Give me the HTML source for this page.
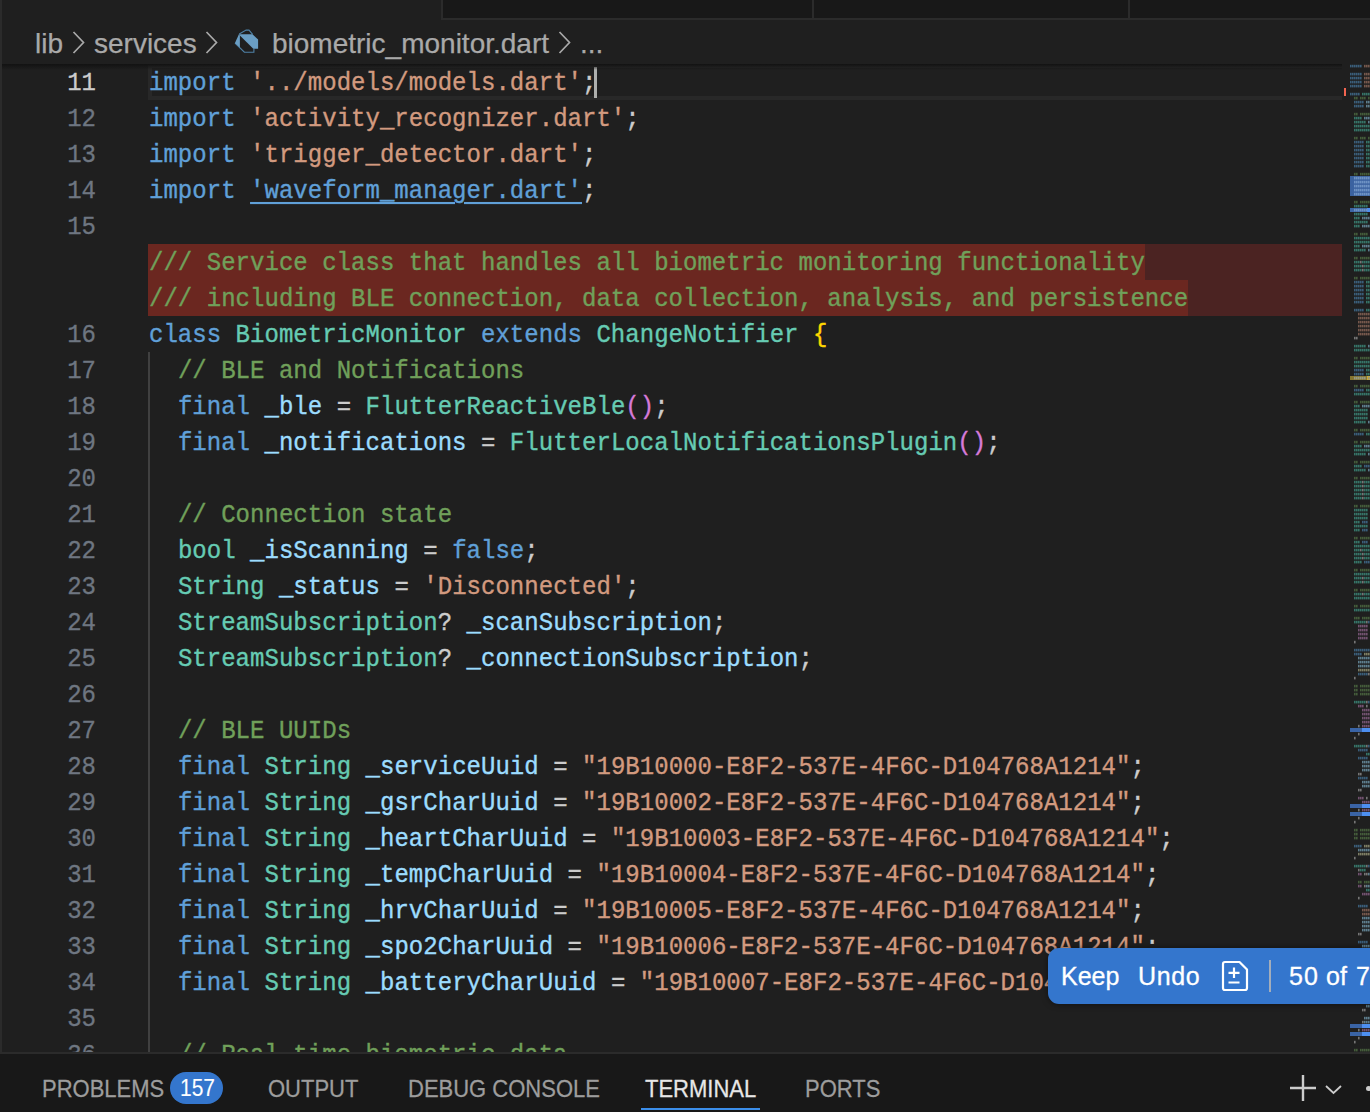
<!DOCTYPE html>
<html><head><meta charset="utf-8">
<style>
*{margin:0;padding:0;box-sizing:border-box}
html,body{width:1370px;height:1112px;overflow:hidden;background:#1f1f1f}
body{position:relative;font-family:"Liberation Sans",sans-serif}
.abs{position:absolute}
.ln{position:absolute;left:0;width:96px;text-align:right;font-family:"Liberation Mono",monospace;font-size:24px;line-height:36px;color:#6e7681;transform-origin:0 0;transform:scaleY(1.07);-webkit-text-stroke:0.3px currentColor}
.ln.act{color:#cccccc}
.code{position:absolute;left:149px;font-family:"Liberation Mono",monospace;font-size:24px;line-height:36px;color:#cccccc;white-space:pre;transform-origin:0 0;transform:scaleY(1.07);-webkit-text-stroke:0.35px currentColor;letter-spacing:0.03px}
.k{color:#60a0d8}.s{color:#d29a7f}.t{color:#66cbb3}.v{color:#9cdcfe}.c{color:#70a05a}.p{color:#d67ad8}.y{color:#ffd700}
.lnk{color:#60a0d8;text-decoration:underline;text-underline-offset:4px;text-decoration-thickness:2px}
.bct{position:absolute;top:29px;font-size:28px;color:#a9a9a9;white-space:pre;line-height:30px;-webkit-text-stroke:0.25px currentColor}
.ptab{position:absolute;top:1073px;font-size:22px;line-height:30px;color:#9d9d9d;white-space:pre;transform-origin:0 0;transform:scaleY(1.1);-webkit-text-stroke:0.25px currentColor}
.wt{position:absolute;font-size:25px;line-height:30px;color:#ffffff;white-space:pre;top:961px;-webkit-text-stroke:0.3px currentColor}
</style></head><body>

<div class="abs" style="left:441px;top:0;width:929px;height:20px;background:#181818;border-left:2px solid #2b2b2b;border-bottom:2px solid #2b2b2b"></div>
<div class="abs" style="left:812px;top:0;width:2px;height:20px;background:#2b2b2b"></div>
<div class="abs" style="left:1128px;top:0;width:2px;height:20px;background:#2b2b2b"></div>
<span class="bct" style="left:35px">lib</span>
<svg class="abs" style="left:72px;top:31px" width="13" height="23" viewBox="0 0 13 23"><path d="M1.5 1 L11.5 11.5 L1.5 22" fill="none" stroke="#a9a9a9" stroke-width="1.7"/></svg>
<span class="bct" style="left:94px">services</span>
<svg class="abs" style="left:205px;top:31px" width="13" height="23" viewBox="0 0 13 23"><path d="M1.5 1 L11.5 11.5 L1.5 22" fill="none" stroke="#a9a9a9" stroke-width="1.7"/></svg>
<svg class="abs" style="left:230px;top:26px" width="32" height="32" viewBox="0 0 32 32">
<path d="M9.2 8 L16.1 4.1 L19 4.1 L22.6 8.3 M5 17 L14.4 26.2 L23.9 26.2 L23.9 22.7" fill="none" stroke="#4f81a6" stroke-width="1.1"/>
<path d="M8.9 8.3 L22.4 8.3 L28.1 13.4 L28.1 22.8 L23.3 22.8 L9.9 9.4 Z" fill="#6a9ec4"/>
<path d="M8.9 8.3 L5 17 L9.9 21.4 L9.9 9.4 Z" fill="#6a9ec4"/>
</svg>
<span class="bct" style="left:272px">biometric_monitor.dart</span>
<svg class="abs" style="left:558px;top:31px" width="13" height="23" viewBox="0 0 13 23"><path d="M1.5 1 L11.5 11.5 L1.5 22" fill="none" stroke="#a9a9a9" stroke-width="1.7"/></svg>
<span class="bct" style="left:580px">...</span>
<div class="abs" style="left:148px;top:64px;width:1194px;height:36px;border:4px solid #282828;border-right:0"></div>
<div class="abs" style="left:148px;top:244px;width:1194px;height:72px;background:#4b2322"></div>
<div class="abs" style="left:148px;top:244px;width:997px;height:36px;background:#6b2720"></div>
<div class="abs" style="left:148px;top:280px;width:1040px;height:36px;background:#6b2720"></div>
<div class="abs" style="left:148px;top:352px;width:2px;height:700px;background:#404040"></div>
<div class="ln act" style="top:64px">11</div>
<div class="code" style="top:64px"><span class=k>import</span> <span class=s>'../models/models.dart'</span>;</div>
<div class="ln" style="top:100px">12</div>
<div class="code" style="top:100px"><span class=k>import</span> <span class=s>'activity_recognizer.dart'</span>;</div>
<div class="ln" style="top:136px">13</div>
<div class="code" style="top:136px"><span class=k>import</span> <span class=s>'trigger_detector.dart'</span>;</div>
<div class="ln" style="top:172px">14</div>
<div class="code" style="top:172px"><span class=k>import</span> <span class=lnk>'waveform_manager.dart'</span>;</div>
<div class="ln" style="top:208px">15</div>
<div class="code c" style="top:244px">/// Service class that handles all biometric monitoring functionality</div>
<div class="code c" style="top:280px">/// including BLE connection, data collection, analysis, and persistence</div>
<div class="ln" style="top:316px">16</div>
<div class="code" style="top:316px"><span class=k>class</span> <span class=t>BiometricMonitor</span> <span class=k>extends</span> <span class=t>ChangeNotifier</span> <span class=y>{</span></div>
<div class="ln" style="top:352px">17</div>
<div class="code" style="top:352px">  <span class=c>// BLE and Notifications</span></div>
<div class="ln" style="top:388px">18</div>
<div class="code" style="top:388px">  <span class=k>final</span> <span class=v>_ble</span> = <span class=t>FlutterReactiveBle</span><span class=p>()</span>;</div>
<div class="ln" style="top:424px">19</div>
<div class="code" style="top:424px">  <span class=k>final</span> <span class=v>_notifications</span> = <span class=t>FlutterLocalNotificationsPlugin</span><span class=p>()</span>;</div>
<div class="ln" style="top:460px">20</div>
<div class="ln" style="top:496px">21</div>
<div class="code" style="top:496px">  <span class=c>// Connection state</span></div>
<div class="ln" style="top:532px">22</div>
<div class="code" style="top:532px">  <span class=t>bool</span> <span class=v>_isScanning</span> = <span class=k>false</span>;</div>
<div class="ln" style="top:568px">23</div>
<div class="code" style="top:568px">  <span class=t>String</span> <span class=v>_status</span> = <span class=s>'Disconnected'</span>;</div>
<div class="ln" style="top:604px">24</div>
<div class="code" style="top:604px">  <span class=t>StreamSubscription</span>? <span class=v>_scanSubscription</span>;</div>
<div class="ln" style="top:640px">25</div>
<div class="code" style="top:640px">  <span class=t>StreamSubscription</span>? <span class=v>_connectionSubscription</span>;</div>
<div class="ln" style="top:676px">26</div>
<div class="ln" style="top:712px">27</div>
<div class="code" style="top:712px">  <span class=c>// BLE UUIDs</span></div>
<div class="ln" style="top:748px">28</div>
<div class="code" style="top:748px">  <span class=k>final</span> <span class=t>String</span> <span class=v>_serviceUuid</span> = <span class=s>"19B10000-E8F2-537E-4F6C-D104768A1214"</span>;</div>
<div class="ln" style="top:784px">29</div>
<div class="code" style="top:784px">  <span class=k>final</span> <span class=t>String</span> <span class=v>_gsrCharUuid</span> = <span class=s>"19B10002-E8F2-537E-4F6C-D104768A1214"</span>;</div>
<div class="ln" style="top:820px">30</div>
<div class="code" style="top:820px">  <span class=k>final</span> <span class=t>String</span> <span class=v>_heartCharUuid</span> = <span class=s>"19B10003-E8F2-537E-4F6C-D104768A1214"</span>;</div>
<div class="ln" style="top:856px">31</div>
<div class="code" style="top:856px">  <span class=k>final</span> <span class=t>String</span> <span class=v>_tempCharUuid</span> = <span class=s>"19B10004-E8F2-537E-4F6C-D104768A1214"</span>;</div>
<div class="ln" style="top:892px">32</div>
<div class="code" style="top:892px">  <span class=k>final</span> <span class=t>String</span> <span class=v>_hrvCharUuid</span> = <span class=s>"19B10005-E8F2-537E-4F6C-D104768A1214"</span>;</div>
<div class="ln" style="top:928px">33</div>
<div class="code" style="top:928px">  <span class=k>final</span> <span class=t>String</span> <span class=v>_spo2CharUuid</span> = <span class=s>"19B10006-E8F2-537E-4F6C-D104768A1214"</span>;</div>
<div class="ln" style="top:964px">34</div>
<div class="code" style="top:964px">  <span class=k>final</span> <span class=t>String</span> <span class=v>_batteryCharUuid</span> = <span class=s>"19B10007-E8F2-537E-4F6C-D104768A1214"</span>;</div>
<div class="ln" style="top:1000px">35</div>
<div class="ln" style="top:1036px">36</div>
<div class="code" style="top:1036px">  <span class=c>// Real-time biometric data</span></div>
<div class="abs" style="left:594px;top:67px;width:3px;height:31px;background:#aeafad"></div>
<div class="abs" style="left:2px;top:64px;width:1340px;height:6px;background:linear-gradient(#121212,rgba(31,31,31,0))"></div>
<div class="abs" style="left:0;top:0;width:2px;height:1052px;background:#2b2b2b"></div>
<svg class="abs" style="left:0;top:0" width="1370" height="1112" viewBox="0 0 1370 1112"><rect x="1350" y="64.8" width="1.6" height="2.6" fill="#3a5e7a"/><rect x="1352" y="64.8" width="1.6" height="2.6" fill="#3a5e7a"/><rect x="1354" y="64.8" width="1.6" height="2.6" fill="#3a5e7a"/><rect x="1356" y="64.8" width="1.6" height="2.6" fill="#3a5e7a"/><rect x="1358" y="64.8" width="1.6" height="2.6" fill="#3a5e7a"/><rect x="1360" y="64.8" width="1.6" height="2.6" fill="#3a5e7a"/><rect x="1364" y="64.8" width="1.6" height="2.6" fill="#76584c"/><rect x="1366" y="64.8" width="1.6" height="2.6" fill="#76584c"/><rect x="1368" y="64.8" width="1.6" height="2.6" fill="#76584c"/><rect x="1350" y="72.8" width="1.6" height="2.6" fill="#3a5e7a"/><rect x="1352" y="72.8" width="1.6" height="2.6" fill="#3a5e7a"/><rect x="1354" y="72.8" width="1.6" height="2.6" fill="#3a5e7a"/><rect x="1356" y="72.8" width="1.6" height="2.6" fill="#3a5e7a"/><rect x="1358" y="72.8" width="1.6" height="2.6" fill="#3a5e7a"/><rect x="1360" y="72.8" width="1.6" height="2.6" fill="#3a5e7a"/><rect x="1364" y="72.8" width="1.6" height="2.6" fill="#76584c"/><rect x="1366" y="72.8" width="1.6" height="2.6" fill="#76584c"/><rect x="1368" y="72.8" width="1.6" height="2.6" fill="#76584c"/><rect x="1350" y="76.8" width="1.6" height="2.6" fill="#3a5e7a"/><rect x="1352" y="76.8" width="1.6" height="2.6" fill="#3a5e7a"/><rect x="1354" y="76.8" width="1.6" height="2.6" fill="#3a5e7a"/><rect x="1356" y="76.8" width="1.6" height="2.6" fill="#3a5e7a"/><rect x="1358" y="76.8" width="1.6" height="2.6" fill="#3a5e7a"/><rect x="1360" y="76.8" width="1.6" height="2.6" fill="#3a5e7a"/><rect x="1364" y="76.8" width="1.6" height="2.6" fill="#76584c"/><rect x="1366" y="76.8" width="1.6" height="2.6" fill="#76584c"/><rect x="1368" y="76.8" width="1.6" height="2.6" fill="#76584c"/><rect x="1350" y="80.8" width="1.6" height="2.6" fill="#3a5e7a"/><rect x="1352" y="80.8" width="1.6" height="2.6" fill="#3a5e7a"/><rect x="1354" y="80.8" width="1.6" height="2.6" fill="#3a5e7a"/><rect x="1356" y="80.8" width="1.6" height="2.6" fill="#3a5e7a"/><rect x="1358" y="80.8" width="1.6" height="2.6" fill="#3a5e7a"/><rect x="1360" y="80.8" width="1.6" height="2.6" fill="#3a5e7a"/><rect x="1364" y="80.8" width="1.6" height="2.6" fill="#76584c"/><rect x="1366" y="80.8" width="1.6" height="2.6" fill="#76584c"/><rect x="1368" y="80.8" width="1.6" height="2.6" fill="#76584c"/><rect x="1350" y="84.8" width="1.6" height="2.6" fill="#3a5e7a"/><rect x="1352" y="84.8" width="1.6" height="2.6" fill="#3a5e7a"/><rect x="1354" y="84.8" width="1.6" height="2.6" fill="#3a5e7a"/><rect x="1356" y="84.8" width="1.6" height="2.6" fill="#3a5e7a"/><rect x="1358" y="84.8" width="1.6" height="2.6" fill="#3a5e7a"/><rect x="1360" y="84.8" width="1.6" height="2.6" fill="#3a5e7a"/><rect x="1364" y="84.8" width="1.6" height="2.6" fill="#76584c"/><rect x="1366" y="84.8" width="1.6" height="2.6" fill="#76584c"/><rect x="1368" y="84.8" width="1.6" height="2.6" fill="#76584c"/><rect x="1350" y="92.8" width="1.6" height="2.6" fill="#3a5e7a"/><rect x="1352" y="92.8" width="1.6" height="2.6" fill="#3a5e7a"/><rect x="1354" y="92.8" width="1.6" height="2.6" fill="#3a5e7a"/><rect x="1356" y="92.8" width="1.6" height="2.6" fill="#3a5e7a"/><rect x="1358" y="92.8" width="1.6" height="2.6" fill="#3a5e7a"/><rect x="1362" y="92.8" width="1.6" height="2.6" fill="#367468"/><rect x="1364" y="92.8" width="1.6" height="2.6" fill="#367468"/><rect x="1366" y="92.8" width="1.6" height="2.6" fill="#367468"/><rect x="1368" y="92.8" width="1.6" height="2.6" fill="#367468"/><rect x="1354" y="96.8" width="1.6" height="2.6" fill="#445c3a"/><rect x="1356" y="96.8" width="1.6" height="2.6" fill="#445c3a"/><rect x="1360" y="96.8" width="1.6" height="2.6" fill="#445c3a"/><rect x="1362" y="96.8" width="1.6" height="2.6" fill="#445c3a"/><rect x="1364" y="96.8" width="1.6" height="2.6" fill="#445c3a"/><rect x="1368" y="96.8" width="1.6" height="2.6" fill="#445c3a"/><rect x="1354" y="100.8" width="1.6" height="2.6" fill="#3a5e7a"/><rect x="1356" y="100.8" width="1.6" height="2.6" fill="#3a5e7a"/><rect x="1358" y="100.8" width="1.6" height="2.6" fill="#3a5e7a"/><rect x="1360" y="100.8" width="1.6" height="2.6" fill="#3a5e7a"/><rect x="1362" y="100.8" width="1.6" height="2.6" fill="#3a5e7a"/><rect x="1366" y="100.8" width="1.6" height="2.6" fill="#5e7e8e"/><rect x="1368" y="100.8" width="1.6" height="2.6" fill="#5e7e8e"/><rect x="1370" y="100.8" width="1.6" height="2.6" fill="#5e7e8e"/><rect x="1372" y="100.8" width="1.6" height="2.6" fill="#5e7e8e"/><rect x="1354" y="104.8" width="1.6" height="2.6" fill="#3a5e7a"/><rect x="1356" y="104.8" width="1.6" height="2.6" fill="#3a5e7a"/><rect x="1358" y="104.8" width="1.6" height="2.6" fill="#3a5e7a"/><rect x="1360" y="104.8" width="1.6" height="2.6" fill="#3a5e7a"/><rect x="1362" y="104.8" width="1.6" height="2.6" fill="#3a5e7a"/><rect x="1366" y="104.8" width="1.6" height="2.6" fill="#5e7e8e"/><rect x="1368" y="104.8" width="1.6" height="2.6" fill="#5e7e8e"/><rect x="1370" y="104.8" width="1.6" height="2.6" fill="#5e7e8e"/><rect x="1372" y="104.8" width="1.6" height="2.6" fill="#5e7e8e"/><rect x="1354" y="112.8" width="1.6" height="2.6" fill="#445c3a"/><rect x="1356" y="112.8" width="1.6" height="2.6" fill="#445c3a"/><rect x="1360" y="112.8" width="1.6" height="2.6" fill="#445c3a"/><rect x="1362" y="112.8" width="1.6" height="2.6" fill="#445c3a"/><rect x="1364" y="112.8" width="1.6" height="2.6" fill="#445c3a"/><rect x="1366" y="112.8" width="1.6" height="2.6" fill="#445c3a"/><rect x="1368" y="112.8" width="1.6" height="2.6" fill="#445c3a"/><rect x="1370" y="112.8" width="1.6" height="2.6" fill="#445c3a"/><rect x="1354" y="116.8" width="1.6" height="2.6" fill="#367468"/><rect x="1356" y="116.8" width="1.6" height="2.6" fill="#367468"/><rect x="1358" y="116.8" width="1.6" height="2.6" fill="#367468"/><rect x="1360" y="116.8" width="1.6" height="2.6" fill="#367468"/><rect x="1364" y="116.8" width="1.6" height="2.6" fill="#5e7e8e"/><rect x="1366" y="116.8" width="1.6" height="2.6" fill="#5e7e8e"/><rect x="1368" y="116.8" width="1.6" height="2.6" fill="#5e7e8e"/><rect x="1370" y="116.8" width="1.6" height="2.6" fill="#5e7e8e"/><rect x="1354" y="120.8" width="1.6" height="2.6" fill="#367468"/><rect x="1356" y="120.8" width="1.6" height="2.6" fill="#367468"/><rect x="1358" y="120.8" width="1.6" height="2.6" fill="#367468"/><rect x="1360" y="120.8" width="1.6" height="2.6" fill="#367468"/><rect x="1362" y="120.8" width="1.6" height="2.6" fill="#367468"/><rect x="1364" y="120.8" width="1.6" height="2.6" fill="#367468"/><rect x="1368" y="120.8" width="1.6" height="2.6" fill="#5e7e8e"/><rect x="1370" y="120.8" width="1.6" height="2.6" fill="#5e7e8e"/><rect x="1354" y="124.8" width="1.6" height="2.6" fill="#367468"/><rect x="1356" y="124.8" width="1.6" height="2.6" fill="#367468"/><rect x="1358" y="124.8" width="1.6" height="2.6" fill="#367468"/><rect x="1360" y="124.8" width="1.6" height="2.6" fill="#367468"/><rect x="1362" y="124.8" width="1.6" height="2.6" fill="#367468"/><rect x="1364" y="124.8" width="1.6" height="2.6" fill="#367468"/><rect x="1366" y="124.8" width="1.6" height="2.6" fill="#367468"/><rect x="1368" y="124.8" width="1.6" height="2.6" fill="#367468"/><rect x="1354" y="128.8" width="1.6" height="2.6" fill="#367468"/><rect x="1356" y="128.8" width="1.6" height="2.6" fill="#367468"/><rect x="1358" y="128.8" width="1.6" height="2.6" fill="#367468"/><rect x="1360" y="128.8" width="1.6" height="2.6" fill="#367468"/><rect x="1362" y="128.8" width="1.6" height="2.6" fill="#367468"/><rect x="1364" y="128.8" width="1.6" height="2.6" fill="#367468"/><rect x="1366" y="128.8" width="1.6" height="2.6" fill="#367468"/><rect x="1368" y="128.8" width="1.6" height="2.6" fill="#367468"/><rect x="1354" y="136.8" width="1.6" height="2.6" fill="#445c3a"/><rect x="1356" y="136.8" width="1.6" height="2.6" fill="#445c3a"/><rect x="1360" y="136.8" width="1.6" height="2.6" fill="#445c3a"/><rect x="1362" y="136.8" width="1.6" height="2.6" fill="#445c3a"/><rect x="1364" y="136.8" width="1.6" height="2.6" fill="#445c3a"/><rect x="1368" y="136.8" width="1.6" height="2.6" fill="#445c3a"/><rect x="1370" y="136.8" width="1.6" height="2.6" fill="#445c3a"/><rect x="1354" y="140.8" width="1.6" height="2.6" fill="#3a5e7a"/><rect x="1356" y="140.8" width="1.6" height="2.6" fill="#3a5e7a"/><rect x="1358" y="140.8" width="1.6" height="2.6" fill="#3a5e7a"/><rect x="1360" y="140.8" width="1.6" height="2.6" fill="#3a5e7a"/><rect x="1362" y="140.8" width="1.6" height="2.6" fill="#3a5e7a"/><rect x="1366" y="140.8" width="1.6" height="2.6" fill="#367468"/><rect x="1368" y="140.8" width="1.6" height="2.6" fill="#367468"/><rect x="1370" y="140.8" width="1.6" height="2.6" fill="#367468"/><rect x="1354" y="144.8" width="1.6" height="2.6" fill="#3a5e7a"/><rect x="1356" y="144.8" width="1.6" height="2.6" fill="#3a5e7a"/><rect x="1358" y="144.8" width="1.6" height="2.6" fill="#3a5e7a"/><rect x="1360" y="144.8" width="1.6" height="2.6" fill="#3a5e7a"/><rect x="1362" y="144.8" width="1.6" height="2.6" fill="#3a5e7a"/><rect x="1366" y="144.8" width="1.6" height="2.6" fill="#367468"/><rect x="1368" y="144.8" width="1.6" height="2.6" fill="#367468"/><rect x="1370" y="144.8" width="1.6" height="2.6" fill="#367468"/><rect x="1354" y="148.8" width="1.6" height="2.6" fill="#3a5e7a"/><rect x="1356" y="148.8" width="1.6" height="2.6" fill="#3a5e7a"/><rect x="1358" y="148.8" width="1.6" height="2.6" fill="#3a5e7a"/><rect x="1360" y="148.8" width="1.6" height="2.6" fill="#3a5e7a"/><rect x="1362" y="148.8" width="1.6" height="2.6" fill="#3a5e7a"/><rect x="1366" y="148.8" width="1.6" height="2.6" fill="#367468"/><rect x="1368" y="148.8" width="1.6" height="2.6" fill="#367468"/><rect x="1370" y="148.8" width="1.6" height="2.6" fill="#367468"/><rect x="1354" y="152.8" width="1.6" height="2.6" fill="#3a5e7a"/><rect x="1356" y="152.8" width="1.6" height="2.6" fill="#3a5e7a"/><rect x="1358" y="152.8" width="1.6" height="2.6" fill="#3a5e7a"/><rect x="1360" y="152.8" width="1.6" height="2.6" fill="#3a5e7a"/><rect x="1362" y="152.8" width="1.6" height="2.6" fill="#3a5e7a"/><rect x="1366" y="152.8" width="1.6" height="2.6" fill="#367468"/><rect x="1368" y="152.8" width="1.6" height="2.6" fill="#367468"/><rect x="1370" y="152.8" width="1.6" height="2.6" fill="#367468"/><rect x="1354" y="156.8" width="1.6" height="2.6" fill="#3a5e7a"/><rect x="1356" y="156.8" width="1.6" height="2.6" fill="#3a5e7a"/><rect x="1358" y="156.8" width="1.6" height="2.6" fill="#3a5e7a"/><rect x="1360" y="156.8" width="1.6" height="2.6" fill="#3a5e7a"/><rect x="1362" y="156.8" width="1.6" height="2.6" fill="#3a5e7a"/><rect x="1366" y="156.8" width="1.6" height="2.6" fill="#367468"/><rect x="1368" y="156.8" width="1.6" height="2.6" fill="#367468"/><rect x="1370" y="156.8" width="1.6" height="2.6" fill="#367468"/><rect x="1354" y="160.8" width="1.6" height="2.6" fill="#3a5e7a"/><rect x="1356" y="160.8" width="1.6" height="2.6" fill="#3a5e7a"/><rect x="1358" y="160.8" width="1.6" height="2.6" fill="#3a5e7a"/><rect x="1360" y="160.8" width="1.6" height="2.6" fill="#3a5e7a"/><rect x="1362" y="160.8" width="1.6" height="2.6" fill="#3a5e7a"/><rect x="1366" y="160.8" width="1.6" height="2.6" fill="#367468"/><rect x="1368" y="160.8" width="1.6" height="2.6" fill="#367468"/><rect x="1370" y="160.8" width="1.6" height="2.6" fill="#367468"/><rect x="1354" y="164.8" width="1.6" height="2.6" fill="#3a5e7a"/><rect x="1356" y="164.8" width="1.6" height="2.6" fill="#3a5e7a"/><rect x="1358" y="164.8" width="1.6" height="2.6" fill="#3a5e7a"/><rect x="1360" y="164.8" width="1.6" height="2.6" fill="#3a5e7a"/><rect x="1362" y="164.8" width="1.6" height="2.6" fill="#3a5e7a"/><rect x="1366" y="164.8" width="1.6" height="2.6" fill="#367468"/><rect x="1368" y="164.8" width="1.6" height="2.6" fill="#367468"/><rect x="1370" y="164.8" width="1.6" height="2.6" fill="#367468"/><rect x="1354" y="172.8" width="1.6" height="2.6" fill="#445c3a"/><rect x="1356" y="172.8" width="1.6" height="2.6" fill="#445c3a"/><rect x="1360" y="172.8" width="1.6" height="2.6" fill="#445c3a"/><rect x="1362" y="172.8" width="1.6" height="2.6" fill="#445c3a"/><rect x="1364" y="172.8" width="1.6" height="2.6" fill="#445c3a"/><rect x="1366" y="172.8" width="1.6" height="2.6" fill="#445c3a"/><rect x="1368" y="172.8" width="1.6" height="2.6" fill="#445c3a"/><rect x="1350" y="176" width="20" height="4" fill="#3b62a0"/><rect x="1354" y="176.8" width="1.6" height="2.6" fill="#6e92c4"/><rect x="1356" y="176.8" width="1.6" height="2.6" fill="#6e92c4"/><rect x="1358" y="176.8" width="1.6" height="2.6" fill="#6e92c4"/><rect x="1360" y="176.8" width="1.6" height="2.6" fill="#6e92c4"/><rect x="1362" y="176.8" width="1.6" height="2.6" fill="#6e92c4"/><rect x="1364" y="176.8" width="1.6" height="2.6" fill="#6e92c4"/><rect x="1366" y="176.8" width="1.6" height="2.6" fill="#6e92c4"/><rect x="1368" y="176.8" width="1.6" height="2.6" fill="#6e92c4"/><rect x="1350" y="180" width="20" height="4" fill="#3b62a0"/><rect x="1354" y="180.8" width="1.6" height="2.6" fill="#6e92c4"/><rect x="1356" y="180.8" width="1.6" height="2.6" fill="#6e92c4"/><rect x="1358" y="180.8" width="1.6" height="2.6" fill="#6e92c4"/><rect x="1360" y="180.8" width="1.6" height="2.6" fill="#6e92c4"/><rect x="1362" y="180.8" width="1.6" height="2.6" fill="#6e92c4"/><rect x="1364" y="180.8" width="1.6" height="2.6" fill="#6e92c4"/><rect x="1366" y="180.8" width="1.6" height="2.6" fill="#6e92c4"/><rect x="1368" y="180.8" width="1.6" height="2.6" fill="#6e92c4"/><rect x="1350" y="184" width="20" height="4" fill="#3b62a0"/><rect x="1354" y="184.8" width="1.6" height="2.6" fill="#6e92c4"/><rect x="1356" y="184.8" width="1.6" height="2.6" fill="#6e92c4"/><rect x="1358" y="184.8" width="1.6" height="2.6" fill="#6e92c4"/><rect x="1360" y="184.8" width="1.6" height="2.6" fill="#6e92c4"/><rect x="1362" y="184.8" width="1.6" height="2.6" fill="#6e92c4"/><rect x="1364" y="184.8" width="1.6" height="2.6" fill="#6e92c4"/><rect x="1366" y="184.8" width="1.6" height="2.6" fill="#6e92c4"/><rect x="1368" y="184.8" width="1.6" height="2.6" fill="#6e92c4"/><rect x="1350" y="188" width="20" height="4" fill="#3b62a0"/><rect x="1354" y="188.8" width="1.6" height="2.6" fill="#6e92c4"/><rect x="1356" y="188.8" width="1.6" height="2.6" fill="#6e92c4"/><rect x="1358" y="188.8" width="1.6" height="2.6" fill="#6e92c4"/><rect x="1360" y="188.8" width="1.6" height="2.6" fill="#6e92c4"/><rect x="1362" y="188.8" width="1.6" height="2.6" fill="#6e92c4"/><rect x="1364" y="188.8" width="1.6" height="2.6" fill="#6e92c4"/><rect x="1366" y="188.8" width="1.6" height="2.6" fill="#6e92c4"/><rect x="1368" y="188.8" width="1.6" height="2.6" fill="#6e92c4"/><rect x="1350" y="192" width="20" height="4" fill="#3b62a0"/><rect x="1354" y="192.8" width="1.6" height="2.6" fill="#6e92c4"/><rect x="1356" y="192.8" width="1.6" height="2.6" fill="#6e92c4"/><rect x="1358" y="192.8" width="1.6" height="2.6" fill="#6e92c4"/><rect x="1360" y="192.8" width="1.6" height="2.6" fill="#6e92c4"/><rect x="1362" y="192.8" width="1.6" height="2.6" fill="#6e92c4"/><rect x="1364" y="192.8" width="1.6" height="2.6" fill="#6e92c4"/><rect x="1366" y="192.8" width="1.6" height="2.6" fill="#6e92c4"/><rect x="1368" y="192.8" width="1.6" height="2.6" fill="#6e92c4"/><rect x="1354" y="200.8" width="1.6" height="2.6" fill="#445c3a"/><rect x="1356" y="200.8" width="1.6" height="2.6" fill="#445c3a"/><rect x="1360" y="200.8" width="1.6" height="2.6" fill="#445c3a"/><rect x="1362" y="200.8" width="1.6" height="2.6" fill="#445c3a"/><rect x="1364" y="200.8" width="1.6" height="2.6" fill="#445c3a"/><rect x="1366" y="200.8" width="1.6" height="2.6" fill="#445c3a"/><rect x="1368" y="200.8" width="1.6" height="2.6" fill="#445c3a"/><rect x="1354" y="204.8" width="1.6" height="2.6" fill="#367468"/><rect x="1356" y="204.8" width="1.6" height="2.6" fill="#367468"/><rect x="1358" y="204.8" width="1.6" height="2.6" fill="#367468"/><rect x="1360" y="204.8" width="1.6" height="2.6" fill="#367468"/><rect x="1362" y="204.8" width="1.6" height="2.6" fill="#367468"/><rect x="1364" y="204.8" width="1.6" height="2.6" fill="#367468"/><rect x="1366" y="204.8" width="1.6" height="2.6" fill="#367468"/><rect x="1370" y="204.8" width="1.6" height="2.6" fill="#5e7e8e"/><rect x="1350" y="208" width="17" height="4" fill="#3c65a5"/><rect x="1367" y="208" width="3" height="4" fill="#4d8ff0"/><rect x="1354" y="208.8" width="1.6" height="2.6" fill="#6e92c4"/><rect x="1356" y="208.8" width="1.6" height="2.6" fill="#6e92c4"/><rect x="1358" y="208.8" width="1.6" height="2.6" fill="#6e92c4"/><rect x="1360" y="208.8" width="1.6" height="2.6" fill="#6e92c4"/><rect x="1362" y="208.8" width="1.6" height="2.6" fill="#6e92c4"/><rect x="1364" y="208.8" width="1.6" height="2.6" fill="#6e92c4"/><rect x="1366" y="208.8" width="1.6" height="2.6" fill="#6e92c4"/><rect x="1370" y="208.8" width="1.6" height="2.6" fill="#6e92c4"/><rect x="1354" y="212.8" width="1.6" height="2.6" fill="#367468"/><rect x="1356" y="212.8" width="1.6" height="2.6" fill="#367468"/><rect x="1358" y="212.8" width="1.6" height="2.6" fill="#367468"/><rect x="1360" y="212.8" width="1.6" height="2.6" fill="#367468"/><rect x="1362" y="212.8" width="1.6" height="2.6" fill="#367468"/><rect x="1364" y="212.8" width="1.6" height="2.6" fill="#367468"/><rect x="1366" y="212.8" width="1.6" height="2.6" fill="#367468"/><rect x="1370" y="212.8" width="1.6" height="2.6" fill="#5e7e8e"/><rect x="1354" y="216.8" width="1.6" height="2.6" fill="#367468"/><rect x="1356" y="216.8" width="1.6" height="2.6" fill="#367468"/><rect x="1358" y="216.8" width="1.6" height="2.6" fill="#367468"/><rect x="1362" y="216.8" width="1.6" height="2.6" fill="#5e7e8e"/><rect x="1364" y="216.8" width="1.6" height="2.6" fill="#5e7e8e"/><rect x="1366" y="216.8" width="1.6" height="2.6" fill="#5e7e8e"/><rect x="1368" y="216.8" width="1.6" height="2.6" fill="#5e7e8e"/><rect x="1354" y="220.8" width="1.6" height="2.6" fill="#367468"/><rect x="1356" y="220.8" width="1.6" height="2.6" fill="#367468"/><rect x="1358" y="220.8" width="1.6" height="2.6" fill="#367468"/><rect x="1360" y="220.8" width="1.6" height="2.6" fill="#367468"/><rect x="1362" y="220.8" width="1.6" height="2.6" fill="#367468"/><rect x="1364" y="220.8" width="1.6" height="2.6" fill="#367468"/><rect x="1366" y="220.8" width="1.6" height="2.6" fill="#367468"/><rect x="1370" y="220.8" width="1.6" height="2.6" fill="#5e7e8e"/><rect x="1354" y="224.8" width="1.6" height="2.6" fill="#367468"/><rect x="1356" y="224.8" width="1.6" height="2.6" fill="#367468"/><rect x="1358" y="224.8" width="1.6" height="2.6" fill="#367468"/><rect x="1362" y="224.8" width="1.6" height="2.6" fill="#5e7e8e"/><rect x="1364" y="224.8" width="1.6" height="2.6" fill="#5e7e8e"/><rect x="1366" y="224.8" width="1.6" height="2.6" fill="#5e7e8e"/><rect x="1368" y="224.8" width="1.6" height="2.6" fill="#5e7e8e"/><rect x="1354" y="232.8" width="1.6" height="2.6" fill="#445c3a"/><rect x="1356" y="232.8" width="1.6" height="2.6" fill="#445c3a"/><rect x="1360" y="232.8" width="1.6" height="2.6" fill="#445c3a"/><rect x="1362" y="232.8" width="1.6" height="2.6" fill="#445c3a"/><rect x="1364" y="232.8" width="1.6" height="2.6" fill="#445c3a"/><rect x="1366" y="232.8" width="1.6" height="2.6" fill="#445c3a"/><rect x="1354" y="236.8" width="1.6" height="2.6" fill="#367468"/><rect x="1356" y="236.8" width="1.6" height="2.6" fill="#367468"/><rect x="1358" y="236.8" width="1.6" height="2.6" fill="#367468"/><rect x="1360" y="236.8" width="1.6" height="2.6" fill="#367468"/><rect x="1362" y="236.8" width="1.6" height="2.6" fill="#367468"/><rect x="1364" y="236.8" width="1.6" height="2.6" fill="#367468"/><rect x="1366" y="236.8" width="1.6" height="2.6" fill="#367468"/><rect x="1368" y="236.8" width="1.6" height="2.6" fill="#367468"/><rect x="1354" y="240.8" width="1.6" height="2.6" fill="#367468"/><rect x="1356" y="240.8" width="1.6" height="2.6" fill="#367468"/><rect x="1358" y="240.8" width="1.6" height="2.6" fill="#367468"/><rect x="1360" y="240.8" width="1.6" height="2.6" fill="#367468"/><rect x="1362" y="240.8" width="1.6" height="2.6" fill="#367468"/><rect x="1364" y="240.8" width="1.6" height="2.6" fill="#367468"/><rect x="1366" y="240.8" width="1.6" height="2.6" fill="#367468"/><rect x="1368" y="240.8" width="1.6" height="2.6" fill="#367468"/><rect x="1354" y="244.8" width="1.6" height="2.6" fill="#367468"/><rect x="1356" y="244.8" width="1.6" height="2.6" fill="#367468"/><rect x="1358" y="244.8" width="1.6" height="2.6" fill="#367468"/><rect x="1362" y="244.8" width="1.6" height="2.6" fill="#5e7e8e"/><rect x="1364" y="244.8" width="1.6" height="2.6" fill="#5e7e8e"/><rect x="1366" y="244.8" width="1.6" height="2.6" fill="#5e7e8e"/><rect x="1368" y="244.8" width="1.6" height="2.6" fill="#5e7e8e"/><rect x="1354" y="248.8" width="1.6" height="2.6" fill="#367468"/><rect x="1356" y="248.8" width="1.6" height="2.6" fill="#367468"/><rect x="1358" y="248.8" width="1.6" height="2.6" fill="#367468"/><rect x="1360" y="248.8" width="1.6" height="2.6" fill="#367468"/><rect x="1362" y="248.8" width="1.6" height="2.6" fill="#367468"/><rect x="1364" y="248.8" width="1.6" height="2.6" fill="#367468"/><rect x="1368" y="248.8" width="1.6" height="2.6" fill="#5e7e8e"/><rect x="1354" y="256.8" width="1.6" height="2.6" fill="#445c3a"/><rect x="1356" y="256.8" width="1.6" height="2.6" fill="#445c3a"/><rect x="1360" y="256.8" width="1.6" height="2.6" fill="#445c3a"/><rect x="1362" y="256.8" width="1.6" height="2.6" fill="#445c3a"/><rect x="1364" y="256.8" width="1.6" height="2.6" fill="#445c3a"/><rect x="1366" y="256.8" width="1.6" height="2.6" fill="#445c3a"/><rect x="1368" y="256.8" width="1.6" height="2.6" fill="#445c3a"/><rect x="1354" y="260.8" width="1.6" height="2.6" fill="#367468"/><rect x="1356" y="260.8" width="1.6" height="2.6" fill="#367468"/><rect x="1358" y="260.8" width="1.6" height="2.6" fill="#367468"/><rect x="1360" y="260.8" width="1.6" height="2.6" fill="#767676"/><rect x="1362" y="260.8" width="1.6" height="2.6" fill="#367468"/><rect x="1364" y="260.8" width="1.6" height="2.6" fill="#367468"/><rect x="1366" y="260.8" width="1.6" height="2.6" fill="#367468"/><rect x="1368" y="260.8" width="1.6" height="2.6" fill="#367468"/><rect x="1354" y="264.8" width="1.6" height="2.6" fill="#367468"/><rect x="1356" y="264.8" width="1.6" height="2.6" fill="#367468"/><rect x="1358" y="264.8" width="1.6" height="2.6" fill="#367468"/><rect x="1360" y="264.8" width="1.6" height="2.6" fill="#367468"/><rect x="1362" y="264.8" width="1.6" height="2.6" fill="#767676"/><rect x="1364" y="264.8" width="1.6" height="2.6" fill="#367468"/><rect x="1366" y="264.8" width="1.6" height="2.6" fill="#367468"/><rect x="1368" y="264.8" width="1.6" height="2.6" fill="#367468"/><rect x="1354" y="268.8" width="1.6" height="2.6" fill="#367468"/><rect x="1356" y="268.8" width="1.6" height="2.6" fill="#367468"/><rect x="1358" y="268.8" width="1.6" height="2.6" fill="#367468"/><rect x="1360" y="268.8" width="1.6" height="2.6" fill="#367468"/><rect x="1362" y="268.8" width="1.6" height="2.6" fill="#767676"/><rect x="1364" y="268.8" width="1.6" height="2.6" fill="#367468"/><rect x="1366" y="268.8" width="1.6" height="2.6" fill="#367468"/><rect x="1368" y="268.8" width="1.6" height="2.6" fill="#367468"/><rect x="1354" y="276.8" width="1.6" height="2.6" fill="#445c3a"/><rect x="1356" y="276.8" width="1.6" height="2.6" fill="#445c3a"/><rect x="1360" y="276.8" width="1.6" height="2.6" fill="#445c3a"/><rect x="1362" y="276.8" width="1.6" height="2.6" fill="#445c3a"/><rect x="1364" y="276.8" width="1.6" height="2.6" fill="#445c3a"/><rect x="1366" y="276.8" width="1.6" height="2.6" fill="#445c3a"/><rect x="1368" y="276.8" width="1.6" height="2.6" fill="#445c3a"/><rect x="1354" y="280.8" width="1.6" height="2.6" fill="#3a5e7a"/><rect x="1356" y="280.8" width="1.6" height="2.6" fill="#3a5e7a"/><rect x="1358" y="280.8" width="1.6" height="2.6" fill="#3a5e7a"/><rect x="1360" y="280.8" width="1.6" height="2.6" fill="#3a5e7a"/><rect x="1362" y="280.8" width="1.6" height="2.6" fill="#3a5e7a"/><rect x="1366" y="280.8" width="1.6" height="2.6" fill="#367468"/><rect x="1368" y="280.8" width="1.6" height="2.6" fill="#367468"/><rect x="1370" y="280.8" width="1.6" height="2.6" fill="#367468"/><rect x="1354" y="284.8" width="1.6" height="2.6" fill="#3a5e7a"/><rect x="1356" y="284.8" width="1.6" height="2.6" fill="#3a5e7a"/><rect x="1358" y="284.8" width="1.6" height="2.6" fill="#3a5e7a"/><rect x="1360" y="284.8" width="1.6" height="2.6" fill="#3a5e7a"/><rect x="1362" y="284.8" width="1.6" height="2.6" fill="#3a5e7a"/><rect x="1366" y="284.8" width="1.6" height="2.6" fill="#367468"/><rect x="1368" y="284.8" width="1.6" height="2.6" fill="#367468"/><rect x="1370" y="284.8" width="1.6" height="2.6" fill="#367468"/><rect x="1354" y="288.8" width="1.6" height="2.6" fill="#3a5e7a"/><rect x="1356" y="288.8" width="1.6" height="2.6" fill="#3a5e7a"/><rect x="1358" y="288.8" width="1.6" height="2.6" fill="#3a5e7a"/><rect x="1360" y="288.8" width="1.6" height="2.6" fill="#3a5e7a"/><rect x="1362" y="288.8" width="1.6" height="2.6" fill="#3a5e7a"/><rect x="1366" y="288.8" width="1.6" height="2.6" fill="#367468"/><rect x="1368" y="288.8" width="1.6" height="2.6" fill="#367468"/><rect x="1370" y="288.8" width="1.6" height="2.6" fill="#367468"/><rect x="1354" y="292.8" width="1.6" height="2.6" fill="#3a5e7a"/><rect x="1356" y="292.8" width="1.6" height="2.6" fill="#3a5e7a"/><rect x="1358" y="292.8" width="1.6" height="2.6" fill="#3a5e7a"/><rect x="1360" y="292.8" width="1.6" height="2.6" fill="#3a5e7a"/><rect x="1362" y="292.8" width="1.6" height="2.6" fill="#3a5e7a"/><rect x="1366" y="292.8" width="1.6" height="2.6" fill="#367468"/><rect x="1368" y="292.8" width="1.6" height="2.6" fill="#367468"/><rect x="1370" y="292.8" width="1.6" height="2.6" fill="#367468"/><rect x="1354" y="296.8" width="1.6" height="2.6" fill="#3a5e7a"/><rect x="1356" y="296.8" width="1.6" height="2.6" fill="#3a5e7a"/><rect x="1358" y="296.8" width="1.6" height="2.6" fill="#3a5e7a"/><rect x="1360" y="296.8" width="1.6" height="2.6" fill="#3a5e7a"/><rect x="1362" y="296.8" width="1.6" height="2.6" fill="#3a5e7a"/><rect x="1366" y="296.8" width="1.6" height="2.6" fill="#367468"/><rect x="1368" y="296.8" width="1.6" height="2.6" fill="#367468"/><rect x="1370" y="296.8" width="1.6" height="2.6" fill="#367468"/><rect x="1354" y="300.8" width="1.6" height="2.6" fill="#3a5e7a"/><rect x="1356" y="300.8" width="1.6" height="2.6" fill="#3a5e7a"/><rect x="1358" y="300.8" width="1.6" height="2.6" fill="#3a5e7a"/><rect x="1360" y="300.8" width="1.6" height="2.6" fill="#3a5e7a"/><rect x="1362" y="300.8" width="1.6" height="2.6" fill="#3a5e7a"/><rect x="1366" y="300.8" width="1.6" height="2.6" fill="#367468"/><rect x="1368" y="300.8" width="1.6" height="2.6" fill="#367468"/><rect x="1370" y="300.8" width="1.6" height="2.6" fill="#367468"/><rect x="1354" y="308.8" width="1.6" height="2.6" fill="#3a5e7a"/><rect x="1356" y="308.8" width="1.6" height="2.6" fill="#3a5e7a"/><rect x="1358" y="308.8" width="1.6" height="2.6" fill="#3a5e7a"/><rect x="1360" y="308.8" width="1.6" height="2.6" fill="#3a5e7a"/><rect x="1362" y="308.8" width="1.6" height="2.6" fill="#3a5e7a"/><rect x="1366" y="308.8" width="1.6" height="2.6" fill="#367468"/><rect x="1368" y="308.8" width="1.6" height="2.6" fill="#367468"/><rect x="1370" y="308.8" width="1.6" height="2.6" fill="#367468"/><rect x="1358" y="312.8" width="1.6" height="2.6" fill="#76584c"/><rect x="1360" y="312.8" width="1.6" height="2.6" fill="#76584c"/><rect x="1362" y="312.8" width="1.6" height="2.6" fill="#76584c"/><rect x="1364" y="312.8" width="1.6" height="2.6" fill="#76584c"/><rect x="1366" y="312.8" width="1.6" height="2.6" fill="#76584c"/><rect x="1368" y="312.8" width="1.6" height="2.6" fill="#76584c"/><rect x="1358" y="316.8" width="1.6" height="2.6" fill="#76584c"/><rect x="1360" y="316.8" width="1.6" height="2.6" fill="#76584c"/><rect x="1362" y="316.8" width="1.6" height="2.6" fill="#76584c"/><rect x="1364" y="316.8" width="1.6" height="2.6" fill="#76584c"/><rect x="1366" y="316.8" width="1.6" height="2.6" fill="#76584c"/><rect x="1368" y="316.8" width="1.6" height="2.6" fill="#76584c"/><rect x="1358" y="320.8" width="1.6" height="2.6" fill="#76584c"/><rect x="1360" y="320.8" width="1.6" height="2.6" fill="#76584c"/><rect x="1362" y="320.8" width="1.6" height="2.6" fill="#76584c"/><rect x="1364" y="320.8" width="1.6" height="2.6" fill="#76584c"/><rect x="1366" y="320.8" width="1.6" height="2.6" fill="#76584c"/><rect x="1368" y="320.8" width="1.6" height="2.6" fill="#76584c"/><rect x="1358" y="324.8" width="1.6" height="2.6" fill="#76584c"/><rect x="1360" y="324.8" width="1.6" height="2.6" fill="#76584c"/><rect x="1362" y="324.8" width="1.6" height="2.6" fill="#76584c"/><rect x="1364" y="324.8" width="1.6" height="2.6" fill="#76584c"/><rect x="1366" y="324.8" width="1.6" height="2.6" fill="#76584c"/><rect x="1368" y="324.8" width="1.6" height="2.6" fill="#76584c"/><rect x="1358" y="328.8" width="1.6" height="2.6" fill="#76584c"/><rect x="1360" y="328.8" width="1.6" height="2.6" fill="#76584c"/><rect x="1362" y="328.8" width="1.6" height="2.6" fill="#76584c"/><rect x="1364" y="328.8" width="1.6" height="2.6" fill="#76584c"/><rect x="1366" y="328.8" width="1.6" height="2.6" fill="#76584c"/><rect x="1368" y="328.8" width="1.6" height="2.6" fill="#76584c"/><rect x="1358" y="332.8" width="1.6" height="2.6" fill="#76584c"/><rect x="1360" y="332.8" width="1.6" height="2.6" fill="#76584c"/><rect x="1362" y="332.8" width="1.6" height="2.6" fill="#76584c"/><rect x="1364" y="332.8" width="1.6" height="2.6" fill="#76584c"/><rect x="1366" y="332.8" width="1.6" height="2.6" fill="#76584c"/><rect x="1368" y="332.8" width="1.6" height="2.6" fill="#76584c"/><rect x="1354" y="336.8" width="1.6" height="2.6" fill="#767676"/><rect x="1356" y="336.8" width="1.6" height="2.6" fill="#767676"/><rect x="1354" y="344.8" width="1.6" height="2.6" fill="#367468"/><rect x="1356" y="344.8" width="1.6" height="2.6" fill="#367468"/><rect x="1358" y="344.8" width="1.6" height="2.6" fill="#367468"/><rect x="1360" y="344.8" width="1.6" height="2.6" fill="#367468"/><rect x="1362" y="344.8" width="1.6" height="2.6" fill="#367468"/><rect x="1364" y="344.8" width="1.6" height="2.6" fill="#367468"/><rect x="1368" y="344.8" width="1.6" height="2.6" fill="#5e7e8e"/><rect x="1354" y="348.8" width="1.6" height="2.6" fill="#367468"/><rect x="1356" y="348.8" width="1.6" height="2.6" fill="#367468"/><rect x="1358" y="348.8" width="1.6" height="2.6" fill="#367468"/><rect x="1360" y="348.8" width="1.6" height="2.6" fill="#367468"/><rect x="1362" y="348.8" width="1.6" height="2.6" fill="#367468"/><rect x="1364" y="348.8" width="1.6" height="2.6" fill="#367468"/><rect x="1366" y="348.8" width="1.6" height="2.6" fill="#367468"/><rect x="1368" y="348.8" width="1.6" height="2.6" fill="#367468"/><rect x="1354" y="356.8" width="1.6" height="2.6" fill="#445c3a"/><rect x="1356" y="356.8" width="1.6" height="2.6" fill="#445c3a"/><rect x="1360" y="356.8" width="1.6" height="2.6" fill="#445c3a"/><rect x="1362" y="356.8" width="1.6" height="2.6" fill="#445c3a"/><rect x="1364" y="356.8" width="1.6" height="2.6" fill="#445c3a"/><rect x="1366" y="356.8" width="1.6" height="2.6" fill="#445c3a"/><rect x="1368" y="356.8" width="1.6" height="2.6" fill="#445c3a"/><rect x="1354" y="360.8" width="1.6" height="2.6" fill="#367468"/><rect x="1356" y="360.8" width="1.6" height="2.6" fill="#367468"/><rect x="1358" y="360.8" width="1.6" height="2.6" fill="#367468"/><rect x="1360" y="360.8" width="1.6" height="2.6" fill="#367468"/><rect x="1362" y="360.8" width="1.6" height="2.6" fill="#367468"/><rect x="1364" y="360.8" width="1.6" height="2.6" fill="#367468"/><rect x="1366" y="360.8" width="1.6" height="2.6" fill="#367468"/><rect x="1368" y="360.8" width="1.6" height="2.6" fill="#367468"/><rect x="1354" y="364.8" width="1.6" height="2.6" fill="#367468"/><rect x="1356" y="364.8" width="1.6" height="2.6" fill="#367468"/><rect x="1358" y="364.8" width="1.6" height="2.6" fill="#367468"/><rect x="1360" y="364.8" width="1.6" height="2.6" fill="#367468"/><rect x="1362" y="364.8" width="1.6" height="2.6" fill="#367468"/><rect x="1364" y="364.8" width="1.6" height="2.6" fill="#367468"/><rect x="1366" y="364.8" width="1.6" height="2.6" fill="#367468"/><rect x="1368" y="364.8" width="1.6" height="2.6" fill="#367468"/><rect x="1354" y="368.8" width="1.6" height="2.6" fill="#3a5e7a"/><rect x="1356" y="368.8" width="1.6" height="2.6" fill="#3a5e7a"/><rect x="1358" y="368.8" width="1.6" height="2.6" fill="#3a5e7a"/><rect x="1360" y="368.8" width="1.6" height="2.6" fill="#3a5e7a"/><rect x="1362" y="368.8" width="1.6" height="2.6" fill="#3a5e7a"/><rect x="1366" y="368.8" width="1.6" height="2.6" fill="#367468"/><rect x="1368" y="368.8" width="1.6" height="2.6" fill="#367468"/><rect x="1370" y="368.8" width="1.6" height="2.6" fill="#367468"/><rect x="1354" y="372.8" width="1.6" height="2.6" fill="#3a5e7a"/><rect x="1356" y="372.8" width="1.6" height="2.6" fill="#3a5e7a"/><rect x="1358" y="372.8" width="1.6" height="2.6" fill="#3a5e7a"/><rect x="1360" y="372.8" width="1.6" height="2.6" fill="#3a5e7a"/><rect x="1362" y="372.8" width="1.6" height="2.6" fill="#3a5e7a"/><rect x="1366" y="372.8" width="1.6" height="2.6" fill="#367468"/><rect x="1368" y="372.8" width="1.6" height="2.6" fill="#367468"/><rect x="1370" y="372.8" width="1.6" height="2.6" fill="#367468"/><rect x="1350" y="376" width="17" height="4" fill="#857530"/><rect x="1367" y="376" width="3" height="4" fill="#c8aa3c"/><rect x="1354" y="376.8" width="1.6" height="2.6" fill="#969a84"/><rect x="1356" y="376.8" width="1.6" height="2.6" fill="#969a84"/><rect x="1358" y="376.8" width="1.6" height="2.6" fill="#969a84"/><rect x="1360" y="376.8" width="1.6" height="2.6" fill="#969a84"/><rect x="1362" y="376.8" width="1.6" height="2.6" fill="#969a84"/><rect x="1364" y="376.8" width="1.6" height="2.6" fill="#969a84"/><rect x="1368" y="376.8" width="1.6" height="2.6" fill="#969a84"/><rect x="1354" y="384.8" width="1.6" height="2.6" fill="#445c3a"/><rect x="1356" y="384.8" width="1.6" height="2.6" fill="#445c3a"/><rect x="1360" y="384.8" width="1.6" height="2.6" fill="#445c3a"/><rect x="1362" y="384.8" width="1.6" height="2.6" fill="#445c3a"/><rect x="1364" y="384.8" width="1.6" height="2.6" fill="#445c3a"/><rect x="1366" y="384.8" width="1.6" height="2.6" fill="#445c3a"/><rect x="1368" y="384.8" width="1.6" height="2.6" fill="#445c3a"/><rect x="1354" y="388.8" width="1.6" height="2.6" fill="#3a5e7a"/><rect x="1356" y="388.8" width="1.6" height="2.6" fill="#3a5e7a"/><rect x="1358" y="388.8" width="1.6" height="2.6" fill="#3a5e7a"/><rect x="1360" y="388.8" width="1.6" height="2.6" fill="#3a5e7a"/><rect x="1362" y="388.8" width="1.6" height="2.6" fill="#3a5e7a"/><rect x="1366" y="388.8" width="1.6" height="2.6" fill="#367468"/><rect x="1368" y="388.8" width="1.6" height="2.6" fill="#367468"/><rect x="1370" y="388.8" width="1.6" height="2.6" fill="#367468"/><rect x="1354" y="392.8" width="1.6" height="2.6" fill="#367468"/><rect x="1356" y="392.8" width="1.6" height="2.6" fill="#367468"/><rect x="1358" y="392.8" width="1.6" height="2.6" fill="#367468"/><rect x="1360" y="392.8" width="1.6" height="2.6" fill="#367468"/><rect x="1362" y="392.8" width="1.6" height="2.6" fill="#367468"/><rect x="1364" y="392.8" width="1.6" height="2.6" fill="#367468"/><rect x="1366" y="392.8" width="1.6" height="2.6" fill="#367468"/><rect x="1368" y="392.8" width="1.6" height="2.6" fill="#367468"/><rect x="1354" y="400.8" width="1.6" height="2.6" fill="#445c3a"/><rect x="1356" y="400.8" width="1.6" height="2.6" fill="#445c3a"/><rect x="1360" y="400.8" width="1.6" height="2.6" fill="#445c3a"/><rect x="1362" y="400.8" width="1.6" height="2.6" fill="#445c3a"/><rect x="1364" y="400.8" width="1.6" height="2.6" fill="#445c3a"/><rect x="1366" y="400.8" width="1.6" height="2.6" fill="#445c3a"/><rect x="1368" y="400.8" width="1.6" height="2.6" fill="#445c3a"/><rect x="1354" y="404.8" width="1.6" height="2.6" fill="#367468"/><rect x="1356" y="404.8" width="1.6" height="2.6" fill="#367468"/><rect x="1358" y="404.8" width="1.6" height="2.6" fill="#367468"/><rect x="1362" y="404.8" width="1.6" height="2.6" fill="#5e7e8e"/><rect x="1364" y="404.8" width="1.6" height="2.6" fill="#5e7e8e"/><rect x="1366" y="404.8" width="1.6" height="2.6" fill="#5e7e8e"/><rect x="1368" y="404.8" width="1.6" height="2.6" fill="#5e7e8e"/><rect x="1354" y="408.8" width="1.6" height="2.6" fill="#367468"/><rect x="1356" y="408.8" width="1.6" height="2.6" fill="#367468"/><rect x="1358" y="408.8" width="1.6" height="2.6" fill="#367468"/><rect x="1360" y="408.8" width="1.6" height="2.6" fill="#367468"/><rect x="1362" y="408.8" width="1.6" height="2.6" fill="#367468"/><rect x="1364" y="408.8" width="1.6" height="2.6" fill="#367468"/><rect x="1366" y="408.8" width="1.6" height="2.6" fill="#367468"/><rect x="1370" y="408.8" width="1.6" height="2.6" fill="#5e7e8e"/><rect x="1354" y="412.8" width="1.6" height="2.6" fill="#367468"/><rect x="1356" y="412.8" width="1.6" height="2.6" fill="#367468"/><rect x="1358" y="412.8" width="1.6" height="2.6" fill="#367468"/><rect x="1360" y="412.8" width="1.6" height="2.6" fill="#367468"/><rect x="1362" y="412.8" width="1.6" height="2.6" fill="#367468"/><rect x="1364" y="412.8" width="1.6" height="2.6" fill="#367468"/><rect x="1366" y="412.8" width="1.6" height="2.6" fill="#367468"/><rect x="1370" y="412.8" width="1.6" height="2.6" fill="#5e7e8e"/><rect x="1354" y="416.8" width="1.6" height="2.6" fill="#367468"/><rect x="1356" y="416.8" width="1.6" height="2.6" fill="#367468"/><rect x="1358" y="416.8" width="1.6" height="2.6" fill="#367468"/><rect x="1360" y="416.8" width="1.6" height="2.6" fill="#367468"/><rect x="1362" y="416.8" width="1.6" height="2.6" fill="#367468"/><rect x="1364" y="416.8" width="1.6" height="2.6" fill="#367468"/><rect x="1366" y="416.8" width="1.6" height="2.6" fill="#367468"/><rect x="1370" y="416.8" width="1.6" height="2.6" fill="#5e7e8e"/><rect x="1354" y="420.8" width="1.6" height="2.6" fill="#367468"/><rect x="1356" y="420.8" width="1.6" height="2.6" fill="#367468"/><rect x="1358" y="420.8" width="1.6" height="2.6" fill="#367468"/><rect x="1360" y="420.8" width="1.6" height="2.6" fill="#367468"/><rect x="1362" y="420.8" width="1.6" height="2.6" fill="#367468"/><rect x="1364" y="420.8" width="1.6" height="2.6" fill="#367468"/><rect x="1368" y="420.8" width="1.6" height="2.6" fill="#5e7e8e"/><rect x="1354" y="428.8" width="1.6" height="2.6" fill="#445c3a"/><rect x="1356" y="428.8" width="1.6" height="2.6" fill="#445c3a"/><rect x="1360" y="428.8" width="1.6" height="2.6" fill="#445c3a"/><rect x="1362" y="428.8" width="1.6" height="2.6" fill="#445c3a"/><rect x="1364" y="428.8" width="1.6" height="2.6" fill="#445c3a"/><rect x="1366" y="428.8" width="1.6" height="2.6" fill="#445c3a"/><rect x="1368" y="428.8" width="1.6" height="2.6" fill="#445c3a"/><rect x="1354" y="432.8" width="1.6" height="2.6" fill="#3a5e7a"/><rect x="1356" y="432.8" width="1.6" height="2.6" fill="#3a5e7a"/><rect x="1358" y="432.8" width="1.6" height="2.6" fill="#3a5e7a"/><rect x="1360" y="432.8" width="1.6" height="2.6" fill="#3a5e7a"/><rect x="1362" y="432.8" width="1.6" height="2.6" fill="#3a5e7a"/><rect x="1366" y="432.8" width="1.6" height="2.6" fill="#367468"/><rect x="1368" y="432.8" width="1.6" height="2.6" fill="#367468"/><rect x="1370" y="432.8" width="1.6" height="2.6" fill="#367468"/><rect x="1354" y="440.8" width="1.6" height="2.6" fill="#445c3a"/><rect x="1356" y="440.8" width="1.6" height="2.6" fill="#445c3a"/><rect x="1360" y="440.8" width="1.6" height="2.6" fill="#445c3a"/><rect x="1362" y="440.8" width="1.6" height="2.6" fill="#445c3a"/><rect x="1364" y="440.8" width="1.6" height="2.6" fill="#445c3a"/><rect x="1366" y="440.8" width="1.6" height="2.6" fill="#445c3a"/><rect x="1368" y="440.8" width="1.6" height="2.6" fill="#445c3a"/><rect x="1354" y="444.8" width="1.6" height="2.6" fill="#367468"/><rect x="1356" y="444.8" width="1.6" height="2.6" fill="#367468"/><rect x="1358" y="444.8" width="1.6" height="2.6" fill="#367468"/><rect x="1360" y="444.8" width="1.6" height="2.6" fill="#367468"/><rect x="1364" y="444.8" width="1.6" height="2.6" fill="#5e7e8e"/><rect x="1366" y="444.8" width="1.6" height="2.6" fill="#5e7e8e"/><rect x="1368" y="444.8" width="1.6" height="2.6" fill="#5e7e8e"/><rect x="1370" y="444.8" width="1.6" height="2.6" fill="#5e7e8e"/><rect x="1354" y="448.8" width="1.6" height="2.6" fill="#367468"/><rect x="1356" y="448.8" width="1.6" height="2.6" fill="#367468"/><rect x="1358" y="448.8" width="1.6" height="2.6" fill="#367468"/><rect x="1360" y="448.8" width="1.6" height="2.6" fill="#367468"/><rect x="1362" y="448.8" width="1.6" height="2.6" fill="#367468"/><rect x="1364" y="448.8" width="1.6" height="2.6" fill="#367468"/><rect x="1366" y="448.8" width="1.6" height="2.6" fill="#367468"/><rect x="1368" y="448.8" width="1.6" height="2.6" fill="#367468"/><rect x="1354" y="452.8" width="1.6" height="2.6" fill="#367468"/><rect x="1356" y="452.8" width="1.6" height="2.6" fill="#367468"/><rect x="1358" y="452.8" width="1.6" height="2.6" fill="#367468"/><rect x="1360" y="452.8" width="1.6" height="2.6" fill="#367468"/><rect x="1362" y="452.8" width="1.6" height="2.6" fill="#367468"/><rect x="1364" y="452.8" width="1.6" height="2.6" fill="#367468"/><rect x="1368" y="452.8" width="1.6" height="2.6" fill="#5e7e8e"/><rect x="1354" y="460.8" width="1.6" height="2.6" fill="#445c3a"/><rect x="1356" y="460.8" width="1.6" height="2.6" fill="#445c3a"/><rect x="1360" y="460.8" width="1.6" height="2.6" fill="#445c3a"/><rect x="1362" y="460.8" width="1.6" height="2.6" fill="#445c3a"/><rect x="1364" y="460.8" width="1.6" height="2.6" fill="#445c3a"/><rect x="1366" y="460.8" width="1.6" height="2.6" fill="#445c3a"/><rect x="1368" y="460.8" width="1.6" height="2.6" fill="#445c3a"/><rect x="1354" y="464.8" width="1.6" height="2.6" fill="#367468"/><rect x="1356" y="464.8" width="1.6" height="2.6" fill="#367468"/><rect x="1358" y="464.8" width="1.6" height="2.6" fill="#367468"/><rect x="1360" y="464.8" width="1.6" height="2.6" fill="#367468"/><rect x="1364" y="464.8" width="1.6" height="2.6" fill="#3a5e7a"/><rect x="1366" y="464.8" width="1.6" height="2.6" fill="#3a5e7a"/><rect x="1368" y="464.8" width="1.6" height="2.6" fill="#3a5e7a"/><rect x="1354" y="468.8" width="1.6" height="2.6" fill="#367468"/><rect x="1356" y="468.8" width="1.6" height="2.6" fill="#367468"/><rect x="1358" y="468.8" width="1.6" height="2.6" fill="#367468"/><rect x="1360" y="468.8" width="1.6" height="2.6" fill="#367468"/><rect x="1362" y="468.8" width="1.6" height="2.6" fill="#367468"/><rect x="1364" y="468.8" width="1.6" height="2.6" fill="#367468"/><rect x="1368" y="468.8" width="1.6" height="2.6" fill="#5e7e8e"/><rect x="1354" y="476.8" width="1.6" height="2.6" fill="#445c3a"/><rect x="1356" y="476.8" width="1.6" height="2.6" fill="#445c3a"/><rect x="1360" y="476.8" width="1.6" height="2.6" fill="#445c3a"/><rect x="1362" y="476.8" width="1.6" height="2.6" fill="#445c3a"/><rect x="1364" y="476.8" width="1.6" height="2.6" fill="#445c3a"/><rect x="1366" y="476.8" width="1.6" height="2.6" fill="#445c3a"/><rect x="1368" y="476.8" width="1.6" height="2.6" fill="#445c3a"/><rect x="1354" y="480.8" width="1.6" height="2.6" fill="#367468"/><rect x="1356" y="480.8" width="1.6" height="2.6" fill="#367468"/><rect x="1358" y="480.8" width="1.6" height="2.6" fill="#367468"/><rect x="1360" y="480.8" width="1.6" height="2.6" fill="#367468"/><rect x="1362" y="480.8" width="1.6" height="2.6" fill="#767676"/><rect x="1364" y="480.8" width="1.6" height="2.6" fill="#367468"/><rect x="1366" y="480.8" width="1.6" height="2.6" fill="#367468"/><rect x="1368" y="480.8" width="1.6" height="2.6" fill="#367468"/><rect x="1354" y="484.8" width="1.6" height="2.6" fill="#367468"/><rect x="1356" y="484.8" width="1.6" height="2.6" fill="#367468"/><rect x="1358" y="484.8" width="1.6" height="2.6" fill="#367468"/><rect x="1360" y="484.8" width="1.6" height="2.6" fill="#367468"/><rect x="1362" y="484.8" width="1.6" height="2.6" fill="#767676"/><rect x="1364" y="484.8" width="1.6" height="2.6" fill="#367468"/><rect x="1366" y="484.8" width="1.6" height="2.6" fill="#367468"/><rect x="1368" y="484.8" width="1.6" height="2.6" fill="#367468"/><rect x="1354" y="488.8" width="1.6" height="2.6" fill="#367468"/><rect x="1356" y="488.8" width="1.6" height="2.6" fill="#367468"/><rect x="1358" y="488.8" width="1.6" height="2.6" fill="#367468"/><rect x="1360" y="488.8" width="1.6" height="2.6" fill="#367468"/><rect x="1362" y="488.8" width="1.6" height="2.6" fill="#767676"/><rect x="1364" y="488.8" width="1.6" height="2.6" fill="#367468"/><rect x="1366" y="488.8" width="1.6" height="2.6" fill="#367468"/><rect x="1368" y="488.8" width="1.6" height="2.6" fill="#367468"/><rect x="1354" y="492.8" width="1.6" height="2.6" fill="#367468"/><rect x="1356" y="492.8" width="1.6" height="2.6" fill="#367468"/><rect x="1358" y="492.8" width="1.6" height="2.6" fill="#367468"/><rect x="1360" y="492.8" width="1.6" height="2.6" fill="#367468"/><rect x="1362" y="492.8" width="1.6" height="2.6" fill="#767676"/><rect x="1364" y="492.8" width="1.6" height="2.6" fill="#367468"/><rect x="1366" y="492.8" width="1.6" height="2.6" fill="#367468"/><rect x="1368" y="492.8" width="1.6" height="2.6" fill="#367468"/><rect x="1354" y="496.8" width="1.6" height="2.6" fill="#367468"/><rect x="1356" y="496.8" width="1.6" height="2.6" fill="#367468"/><rect x="1358" y="496.8" width="1.6" height="2.6" fill="#367468"/><rect x="1360" y="496.8" width="1.6" height="2.6" fill="#367468"/><rect x="1362" y="496.8" width="1.6" height="2.6" fill="#767676"/><rect x="1364" y="496.8" width="1.6" height="2.6" fill="#367468"/><rect x="1366" y="496.8" width="1.6" height="2.6" fill="#367468"/><rect x="1368" y="496.8" width="1.6" height="2.6" fill="#367468"/><rect x="1354" y="504.8" width="1.6" height="2.6" fill="#445c3a"/><rect x="1356" y="504.8" width="1.6" height="2.6" fill="#445c3a"/><rect x="1360" y="504.8" width="1.6" height="2.6" fill="#445c3a"/><rect x="1362" y="504.8" width="1.6" height="2.6" fill="#445c3a"/><rect x="1364" y="504.8" width="1.6" height="2.6" fill="#445c3a"/><rect x="1366" y="504.8" width="1.6" height="2.6" fill="#445c3a"/><rect x="1368" y="504.8" width="1.6" height="2.6" fill="#445c3a"/><rect x="1354" y="508.8" width="1.6" height="2.6" fill="#367468"/><rect x="1356" y="508.8" width="1.6" height="2.6" fill="#367468"/><rect x="1358" y="508.8" width="1.6" height="2.6" fill="#367468"/><rect x="1360" y="508.8" width="1.6" height="2.6" fill="#367468"/><rect x="1362" y="508.8" width="1.6" height="2.6" fill="#367468"/><rect x="1364" y="508.8" width="1.6" height="2.6" fill="#367468"/><rect x="1366" y="508.8" width="1.6" height="2.6" fill="#367468"/><rect x="1370" y="508.8" width="1.6" height="2.6" fill="#3a5e7a"/><rect x="1354" y="512.8" width="1.6" height="2.6" fill="#367468"/><rect x="1356" y="512.8" width="1.6" height="2.6" fill="#367468"/><rect x="1358" y="512.8" width="1.6" height="2.6" fill="#367468"/><rect x="1360" y="512.8" width="1.6" height="2.6" fill="#367468"/><rect x="1362" y="512.8" width="1.6" height="2.6" fill="#367468"/><rect x="1364" y="512.8" width="1.6" height="2.6" fill="#367468"/><rect x="1366" y="512.8" width="1.6" height="2.6" fill="#367468"/><rect x="1370" y="512.8" width="1.6" height="2.6" fill="#3a5e7a"/><rect x="1354" y="516.8" width="1.6" height="2.6" fill="#367468"/><rect x="1356" y="516.8" width="1.6" height="2.6" fill="#367468"/><rect x="1358" y="516.8" width="1.6" height="2.6" fill="#367468"/><rect x="1360" y="516.8" width="1.6" height="2.6" fill="#367468"/><rect x="1362" y="516.8" width="1.6" height="2.6" fill="#367468"/><rect x="1364" y="516.8" width="1.6" height="2.6" fill="#367468"/><rect x="1366" y="516.8" width="1.6" height="2.6" fill="#367468"/><rect x="1370" y="516.8" width="1.6" height="2.6" fill="#3a5e7a"/><rect x="1354" y="520.8" width="1.6" height="2.6" fill="#367468"/><rect x="1356" y="520.8" width="1.6" height="2.6" fill="#367468"/><rect x="1358" y="520.8" width="1.6" height="2.6" fill="#367468"/><rect x="1362" y="520.8" width="1.6" height="2.6" fill="#3a5e7a"/><rect x="1364" y="520.8" width="1.6" height="2.6" fill="#3a5e7a"/><rect x="1366" y="520.8" width="1.6" height="2.6" fill="#3a5e7a"/><rect x="1354" y="524.8" width="1.6" height="2.6" fill="#367468"/><rect x="1356" y="524.8" width="1.6" height="2.6" fill="#367468"/><rect x="1358" y="524.8" width="1.6" height="2.6" fill="#367468"/><rect x="1360" y="524.8" width="1.6" height="2.6" fill="#367468"/><rect x="1362" y="524.8" width="1.6" height="2.6" fill="#367468"/><rect x="1364" y="524.8" width="1.6" height="2.6" fill="#367468"/><rect x="1366" y="524.8" width="1.6" height="2.6" fill="#367468"/><rect x="1370" y="524.8" width="1.6" height="2.6" fill="#3a5e7a"/><rect x="1354" y="528.8" width="1.6" height="2.6" fill="#367468"/><rect x="1356" y="528.8" width="1.6" height="2.6" fill="#367468"/><rect x="1358" y="528.8" width="1.6" height="2.6" fill="#367468"/><rect x="1362" y="528.8" width="1.6" height="2.6" fill="#3a5e7a"/><rect x="1364" y="528.8" width="1.6" height="2.6" fill="#3a5e7a"/><rect x="1366" y="528.8" width="1.6" height="2.6" fill="#3a5e7a"/><rect x="1354" y="536.8" width="1.6" height="2.6" fill="#445c3a"/><rect x="1356" y="536.8" width="1.6" height="2.6" fill="#445c3a"/><rect x="1360" y="536.8" width="1.6" height="2.6" fill="#445c3a"/><rect x="1362" y="536.8" width="1.6" height="2.6" fill="#445c3a"/><rect x="1364" y="536.8" width="1.6" height="2.6" fill="#445c3a"/><rect x="1366" y="536.8" width="1.6" height="2.6" fill="#445c3a"/><rect x="1368" y="536.8" width="1.6" height="2.6" fill="#445c3a"/><rect x="1354" y="540.8" width="1.6" height="2.6" fill="#367468"/><rect x="1356" y="540.8" width="1.6" height="2.6" fill="#367468"/><rect x="1358" y="540.8" width="1.6" height="2.6" fill="#367468"/><rect x="1362" y="540.8" width="1.6" height="2.6" fill="#3a5e7a"/><rect x="1364" y="540.8" width="1.6" height="2.6" fill="#3a5e7a"/><rect x="1366" y="540.8" width="1.6" height="2.6" fill="#3a5e7a"/><rect x="1354" y="544.8" width="1.6" height="2.6" fill="#367468"/><rect x="1356" y="544.8" width="1.6" height="2.6" fill="#367468"/><rect x="1358" y="544.8" width="1.6" height="2.6" fill="#367468"/><rect x="1360" y="544.8" width="1.6" height="2.6" fill="#367468"/><rect x="1362" y="544.8" width="1.6" height="2.6" fill="#367468"/><rect x="1364" y="544.8" width="1.6" height="2.6" fill="#367468"/><rect x="1366" y="544.8" width="1.6" height="2.6" fill="#367468"/><rect x="1368" y="544.8" width="1.6" height="2.6" fill="#367468"/><rect x="1354" y="548.8" width="1.6" height="2.6" fill="#367468"/><rect x="1356" y="548.8" width="1.6" height="2.6" fill="#367468"/><rect x="1358" y="548.8" width="1.6" height="2.6" fill="#367468"/><rect x="1360" y="548.8" width="1.6" height="2.6" fill="#767676"/><rect x="1362" y="548.8" width="1.6" height="2.6" fill="#367468"/><rect x="1364" y="548.8" width="1.6" height="2.6" fill="#367468"/><rect x="1366" y="548.8" width="1.6" height="2.6" fill="#367468"/><rect x="1368" y="548.8" width="1.6" height="2.6" fill="#367468"/><rect x="1354" y="552.8" width="1.6" height="2.6" fill="#367468"/><rect x="1356" y="552.8" width="1.6" height="2.6" fill="#367468"/><rect x="1358" y="552.8" width="1.6" height="2.6" fill="#367468"/><rect x="1360" y="552.8" width="1.6" height="2.6" fill="#367468"/><rect x="1362" y="552.8" width="1.6" height="2.6" fill="#767676"/><rect x="1364" y="552.8" width="1.6" height="2.6" fill="#367468"/><rect x="1366" y="552.8" width="1.6" height="2.6" fill="#367468"/><rect x="1368" y="552.8" width="1.6" height="2.6" fill="#367468"/><rect x="1354" y="556.8" width="1.6" height="2.6" fill="#367468"/><rect x="1356" y="556.8" width="1.6" height="2.6" fill="#367468"/><rect x="1358" y="556.8" width="1.6" height="2.6" fill="#367468"/><rect x="1360" y="556.8" width="1.6" height="2.6" fill="#367468"/><rect x="1362" y="556.8" width="1.6" height="2.6" fill="#767676"/><rect x="1364" y="556.8" width="1.6" height="2.6" fill="#367468"/><rect x="1366" y="556.8" width="1.6" height="2.6" fill="#367468"/><rect x="1368" y="556.8" width="1.6" height="2.6" fill="#367468"/><rect x="1354" y="560.8" width="1.6" height="2.6" fill="#367468"/><rect x="1356" y="560.8" width="1.6" height="2.6" fill="#367468"/><rect x="1358" y="560.8" width="1.6" height="2.6" fill="#367468"/><rect x="1360" y="560.8" width="1.6" height="2.6" fill="#367468"/><rect x="1364" y="560.8" width="1.6" height="2.6" fill="#3a5e7a"/><rect x="1366" y="560.8" width="1.6" height="2.6" fill="#3a5e7a"/><rect x="1368" y="560.8" width="1.6" height="2.6" fill="#3a5e7a"/><rect x="1354" y="568.8" width="1.6" height="2.6" fill="#445c3a"/><rect x="1356" y="568.8" width="1.6" height="2.6" fill="#445c3a"/><rect x="1360" y="568.8" width="1.6" height="2.6" fill="#445c3a"/><rect x="1362" y="568.8" width="1.6" height="2.6" fill="#445c3a"/><rect x="1364" y="568.8" width="1.6" height="2.6" fill="#445c3a"/><rect x="1366" y="568.8" width="1.6" height="2.6" fill="#445c3a"/><rect x="1368" y="568.8" width="1.6" height="2.6" fill="#445c3a"/><rect x="1354" y="572.8" width="1.6" height="2.6" fill="#367468"/><rect x="1356" y="572.8" width="1.6" height="2.6" fill="#367468"/><rect x="1358" y="572.8" width="1.6" height="2.6" fill="#367468"/><rect x="1360" y="572.8" width="1.6" height="2.6" fill="#367468"/><rect x="1362" y="572.8" width="1.6" height="2.6" fill="#367468"/><rect x="1364" y="572.8" width="1.6" height="2.6" fill="#367468"/><rect x="1366" y="572.8" width="1.6" height="2.6" fill="#367468"/><rect x="1368" y="572.8" width="1.6" height="2.6" fill="#367468"/><rect x="1354" y="576.8" width="1.6" height="2.6" fill="#367468"/><rect x="1356" y="576.8" width="1.6" height="2.6" fill="#367468"/><rect x="1358" y="576.8" width="1.6" height="2.6" fill="#367468"/><rect x="1360" y="576.8" width="1.6" height="2.6" fill="#367468"/><rect x="1362" y="576.8" width="1.6" height="2.6" fill="#767676"/><rect x="1364" y="576.8" width="1.6" height="2.6" fill="#367468"/><rect x="1366" y="576.8" width="1.6" height="2.6" fill="#367468"/><rect x="1368" y="576.8" width="1.6" height="2.6" fill="#367468"/><rect x="1354" y="580.8" width="1.6" height="2.6" fill="#367468"/><rect x="1356" y="580.8" width="1.6" height="2.6" fill="#367468"/><rect x="1358" y="580.8" width="1.6" height="2.6" fill="#367468"/><rect x="1360" y="580.8" width="1.6" height="2.6" fill="#367468"/><rect x="1362" y="580.8" width="1.6" height="2.6" fill="#767676"/><rect x="1364" y="580.8" width="1.6" height="2.6" fill="#367468"/><rect x="1366" y="580.8" width="1.6" height="2.6" fill="#367468"/><rect x="1368" y="580.8" width="1.6" height="2.6" fill="#367468"/><rect x="1354" y="588.8" width="1.6" height="2.6" fill="#445c3a"/><rect x="1356" y="588.8" width="1.6" height="2.6" fill="#445c3a"/><rect x="1360" y="588.8" width="1.6" height="2.6" fill="#445c3a"/><rect x="1362" y="588.8" width="1.6" height="2.6" fill="#445c3a"/><rect x="1364" y="588.8" width="1.6" height="2.6" fill="#445c3a"/><rect x="1366" y="588.8" width="1.6" height="2.6" fill="#445c3a"/><rect x="1368" y="588.8" width="1.6" height="2.6" fill="#445c3a"/><rect x="1354" y="592.8" width="1.6" height="2.6" fill="#367468"/><rect x="1356" y="592.8" width="1.6" height="2.6" fill="#367468"/><rect x="1358" y="592.8" width="1.6" height="2.6" fill="#367468"/><rect x="1360" y="592.8" width="1.6" height="2.6" fill="#367468"/><rect x="1362" y="592.8" width="1.6" height="2.6" fill="#767676"/><rect x="1364" y="592.8" width="1.6" height="2.6" fill="#367468"/><rect x="1366" y="592.8" width="1.6" height="2.6" fill="#367468"/><rect x="1368" y="592.8" width="1.6" height="2.6" fill="#367468"/><rect x="1354" y="596.8" width="1.6" height="2.6" fill="#367468"/><rect x="1356" y="596.8" width="1.6" height="2.6" fill="#367468"/><rect x="1358" y="596.8" width="1.6" height="2.6" fill="#367468"/><rect x="1360" y="596.8" width="1.6" height="2.6" fill="#367468"/><rect x="1362" y="596.8" width="1.6" height="2.6" fill="#367468"/><rect x="1364" y="596.8" width="1.6" height="2.6" fill="#367468"/><rect x="1366" y="596.8" width="1.6" height="2.6" fill="#367468"/><rect x="1368" y="596.8" width="1.6" height="2.6" fill="#367468"/><rect x="1354" y="604.8" width="1.6" height="2.6" fill="#445c3a"/><rect x="1356" y="604.8" width="1.6" height="2.6" fill="#445c3a"/><rect x="1360" y="604.8" width="1.6" height="2.6" fill="#445c3a"/><rect x="1362" y="604.8" width="1.6" height="2.6" fill="#445c3a"/><rect x="1364" y="604.8" width="1.6" height="2.6" fill="#445c3a"/><rect x="1366" y="604.8" width="1.6" height="2.6" fill="#445c3a"/><rect x="1368" y="604.8" width="1.6" height="2.6" fill="#445c3a"/><rect x="1354" y="608.8" width="1.6" height="2.6" fill="#367468"/><rect x="1356" y="608.8" width="1.6" height="2.6" fill="#367468"/><rect x="1358" y="608.8" width="1.6" height="2.6" fill="#367468"/><rect x="1360" y="608.8" width="1.6" height="2.6" fill="#367468"/><rect x="1362" y="608.8" width="1.6" height="2.6" fill="#367468"/><rect x="1364" y="608.8" width="1.6" height="2.6" fill="#367468"/><rect x="1366" y="608.8" width="1.6" height="2.6" fill="#367468"/><rect x="1368" y="608.8" width="1.6" height="2.6" fill="#367468"/><rect x="1354" y="616.8" width="1.6" height="2.6" fill="#445c3a"/><rect x="1356" y="616.8" width="1.6" height="2.6" fill="#445c3a"/><rect x="1358" y="616.8" width="1.6" height="2.6" fill="#445c3a"/><rect x="1362" y="616.8" width="1.6" height="2.6" fill="#445c3a"/><rect x="1364" y="616.8" width="1.6" height="2.6" fill="#445c3a"/><rect x="1366" y="616.8" width="1.6" height="2.6" fill="#445c3a"/><rect x="1368" y="616.8" width="1.6" height="2.6" fill="#445c3a"/><rect x="1354" y="620.8" width="1.6" height="2.6" fill="#367468"/><rect x="1356" y="620.8" width="1.6" height="2.6" fill="#367468"/><rect x="1358" y="620.8" width="1.6" height="2.6" fill="#367468"/><rect x="1360" y="620.8" width="1.6" height="2.6" fill="#367468"/><rect x="1362" y="620.8" width="1.6" height="2.6" fill="#367468"/><rect x="1364" y="620.8" width="1.6" height="2.6" fill="#367468"/><rect x="1366" y="620.8" width="1.6" height="2.6" fill="#767676"/><rect x="1368" y="620.8" width="1.6" height="2.6" fill="#3a5e7a"/><rect x="1358" y="624.8" width="1.6" height="2.6" fill="#725270"/><rect x="1360" y="624.8" width="1.6" height="2.6" fill="#725270"/><rect x="1362" y="624.8" width="1.6" height="2.6" fill="#725270"/><rect x="1364" y="624.8" width="1.6" height="2.6" fill="#725270"/><rect x="1366" y="624.8" width="1.6" height="2.6" fill="#725270"/><rect x="1370" y="624.8" width="1.6" height="2.6" fill="#5e7e8e"/><rect x="1372" y="624.8" width="1.6" height="2.6" fill="#5e7e8e"/><rect x="1358" y="628.8" width="1.6" height="2.6" fill="#725270"/><rect x="1360" y="628.8" width="1.6" height="2.6" fill="#725270"/><rect x="1362" y="628.8" width="1.6" height="2.6" fill="#725270"/><rect x="1364" y="628.8" width="1.6" height="2.6" fill="#725270"/><rect x="1366" y="628.8" width="1.6" height="2.6" fill="#725270"/><rect x="1370" y="628.8" width="1.6" height="2.6" fill="#5e7e8e"/><rect x="1372" y="628.8" width="1.6" height="2.6" fill="#5e7e8e"/><rect x="1358" y="632.8" width="1.6" height="2.6" fill="#725270"/><rect x="1360" y="632.8" width="1.6" height="2.6" fill="#725270"/><rect x="1362" y="632.8" width="1.6" height="2.6" fill="#725270"/><rect x="1364" y="632.8" width="1.6" height="2.6" fill="#725270"/><rect x="1366" y="632.8" width="1.6" height="2.6" fill="#725270"/><rect x="1370" y="632.8" width="1.6" height="2.6" fill="#5e7e8e"/><rect x="1372" y="632.8" width="1.6" height="2.6" fill="#5e7e8e"/><rect x="1358" y="636.8" width="1.6" height="2.6" fill="#725270"/><rect x="1360" y="636.8" width="1.6" height="2.6" fill="#725270"/><rect x="1362" y="636.8" width="1.6" height="2.6" fill="#725270"/><rect x="1364" y="636.8" width="1.6" height="2.6" fill="#725270"/><rect x="1366" y="636.8" width="1.6" height="2.6" fill="#725270"/><rect x="1370" y="636.8" width="1.6" height="2.6" fill="#5e7e8e"/><rect x="1372" y="636.8" width="1.6" height="2.6" fill="#5e7e8e"/><rect x="1354" y="640.8" width="1.6" height="2.6" fill="#767676"/><rect x="1354" y="648.8" width="1.6" height="2.6" fill="#3a5e7a"/><rect x="1356" y="648.8" width="1.6" height="2.6" fill="#3a5e7a"/><rect x="1358" y="648.8" width="1.6" height="2.6" fill="#3a5e7a"/><rect x="1360" y="648.8" width="1.6" height="2.6" fill="#3a5e7a"/><rect x="1362" y="648.8" width="1.6" height="2.6" fill="#3a5e7a"/><rect x="1364" y="648.8" width="1.6" height="2.6" fill="#3a5e7a"/><rect x="1366" y="648.8" width="1.6" height="2.6" fill="#3a5e7a"/><rect x="1368" y="648.8" width="1.6" height="2.6" fill="#3a5e7a"/><rect x="1354" y="652.8" width="1.6" height="2.6" fill="#3a5e7a"/><rect x="1356" y="652.8" width="1.6" height="2.6" fill="#3a5e7a"/><rect x="1358" y="652.8" width="1.6" height="2.6" fill="#3a5e7a"/><rect x="1360" y="652.8" width="1.6" height="2.6" fill="#3a5e7a"/><rect x="1364" y="652.8" width="1.6" height="2.6" fill="#7e7e64"/><rect x="1366" y="652.8" width="1.6" height="2.6" fill="#7e7e64"/><rect x="1368" y="652.8" width="1.6" height="2.6" fill="#7e7e64"/><rect x="1358" y="656.8" width="1.6" height="2.6" fill="#5e7e8e"/><rect x="1360" y="656.8" width="1.6" height="2.6" fill="#5e7e8e"/><rect x="1362" y="656.8" width="1.6" height="2.6" fill="#5e7e8e"/><rect x="1364" y="656.8" width="1.6" height="2.6" fill="#5e7e8e"/><rect x="1366" y="656.8" width="1.6" height="2.6" fill="#5e7e8e"/><rect x="1368" y="656.8" width="1.6" height="2.6" fill="#5e7e8e"/><rect x="1370" y="656.8" width="1.6" height="2.6" fill="#5e7e8e"/><rect x="1358" y="660.8" width="1.6" height="2.6" fill="#5e7e8e"/><rect x="1360" y="660.8" width="1.6" height="2.6" fill="#5e7e8e"/><rect x="1362" y="660.8" width="1.6" height="2.6" fill="#5e7e8e"/><rect x="1364" y="660.8" width="1.6" height="2.6" fill="#5e7e8e"/><rect x="1366" y="660.8" width="1.6" height="2.6" fill="#5e7e8e"/><rect x="1368" y="660.8" width="1.6" height="2.6" fill="#5e7e8e"/><rect x="1370" y="660.8" width="1.6" height="2.6" fill="#5e7e8e"/><rect x="1358" y="664.8" width="1.6" height="2.6" fill="#5e7e8e"/><rect x="1360" y="664.8" width="1.6" height="2.6" fill="#5e7e8e"/><rect x="1362" y="664.8" width="1.6" height="2.6" fill="#5e7e8e"/><rect x="1364" y="664.8" width="1.6" height="2.6" fill="#5e7e8e"/><rect x="1366" y="664.8" width="1.6" height="2.6" fill="#5e7e8e"/><rect x="1368" y="664.8" width="1.6" height="2.6" fill="#5e7e8e"/><rect x="1370" y="664.8" width="1.6" height="2.6" fill="#5e7e8e"/><rect x="1358" y="668.8" width="1.6" height="2.6" fill="#7e7e64"/><rect x="1360" y="668.8" width="1.6" height="2.6" fill="#7e7e64"/><rect x="1362" y="668.8" width="1.6" height="2.6" fill="#7e7e64"/><rect x="1364" y="668.8" width="1.6" height="2.6" fill="#7e7e64"/><rect x="1366" y="668.8" width="1.6" height="2.6" fill="#7e7e64"/><rect x="1368" y="668.8" width="1.6" height="2.6" fill="#7e7e64"/><rect x="1358" y="672.8" width="1.6" height="2.6" fill="#3a5e7a"/><rect x="1360" y="672.8" width="1.6" height="2.6" fill="#3a5e7a"/><rect x="1362" y="672.8" width="1.6" height="2.6" fill="#3a5e7a"/><rect x="1364" y="672.8" width="1.6" height="2.6" fill="#3a5e7a"/><rect x="1366" y="672.8" width="1.6" height="2.6" fill="#3a5e7a"/><rect x="1368" y="672.8" width="1.6" height="2.6" fill="#767676"/><rect x="1370" y="672.8" width="1.6" height="2.6" fill="#767676"/><rect x="1354" y="676.8" width="1.6" height="2.6" fill="#767676"/><rect x="1354" y="684.8" width="1.6" height="2.6" fill="#445c3a"/><rect x="1356" y="684.8" width="1.6" height="2.6" fill="#445c3a"/><rect x="1360" y="684.8" width="1.6" height="2.6" fill="#445c3a"/><rect x="1362" y="684.8" width="1.6" height="2.6" fill="#445c3a"/><rect x="1364" y="684.8" width="1.6" height="2.6" fill="#445c3a"/><rect x="1366" y="684.8" width="1.6" height="2.6" fill="#445c3a"/><rect x="1368" y="684.8" width="1.6" height="2.6" fill="#445c3a"/><rect x="1354" y="688.8" width="1.6" height="2.6" fill="#445c3a"/><rect x="1356" y="688.8" width="1.6" height="2.6" fill="#445c3a"/><rect x="1360" y="688.8" width="1.6" height="2.6" fill="#445c3a"/><rect x="1362" y="688.8" width="1.6" height="2.6" fill="#445c3a"/><rect x="1364" y="688.8" width="1.6" height="2.6" fill="#445c3a"/><rect x="1366" y="688.8" width="1.6" height="2.6" fill="#445c3a"/><rect x="1368" y="688.8" width="1.6" height="2.6" fill="#445c3a"/><rect x="1354" y="692.8" width="1.6" height="2.6" fill="#445c3a"/><rect x="1356" y="692.8" width="1.6" height="2.6" fill="#445c3a"/><rect x="1360" y="692.8" width="1.6" height="2.6" fill="#445c3a"/><rect x="1362" y="692.8" width="1.6" height="2.6" fill="#445c3a"/><rect x="1364" y="692.8" width="1.6" height="2.6" fill="#445c3a"/><rect x="1366" y="692.8" width="1.6" height="2.6" fill="#445c3a"/><rect x="1368" y="692.8" width="1.6" height="2.6" fill="#445c3a"/><rect x="1354" y="700.8" width="1.6" height="2.6" fill="#367468"/><rect x="1356" y="700.8" width="1.6" height="2.6" fill="#367468"/><rect x="1358" y="700.8" width="1.6" height="2.6" fill="#367468"/><rect x="1360" y="700.8" width="1.6" height="2.6" fill="#367468"/><rect x="1362" y="700.8" width="1.6" height="2.6" fill="#367468"/><rect x="1364" y="700.8" width="1.6" height="2.6" fill="#367468"/><rect x="1366" y="700.8" width="1.6" height="2.6" fill="#767676"/><rect x="1368" y="700.8" width="1.6" height="2.6" fill="#3a5e7a"/><rect x="1358" y="704.8" width="1.6" height="2.6" fill="#725270"/><rect x="1360" y="704.8" width="1.6" height="2.6" fill="#725270"/><rect x="1362" y="704.8" width="1.6" height="2.6" fill="#725270"/><rect x="1366" y="704.8" width="1.6" height="2.6" fill="#767676"/><rect x="1362" y="708.8" width="1.6" height="2.6" fill="#725270"/><rect x="1364" y="708.8" width="1.6" height="2.6" fill="#725270"/><rect x="1366" y="708.8" width="1.6" height="2.6" fill="#725270"/><rect x="1368" y="708.8" width="1.6" height="2.6" fill="#725270"/><rect x="1362" y="712.8" width="1.6" height="2.6" fill="#725270"/><rect x="1364" y="712.8" width="1.6" height="2.6" fill="#725270"/><rect x="1366" y="712.8" width="1.6" height="2.6" fill="#725270"/><rect x="1368" y="712.8" width="1.6" height="2.6" fill="#725270"/><rect x="1362" y="716.8" width="1.6" height="2.6" fill="#725270"/><rect x="1364" y="716.8" width="1.6" height="2.6" fill="#725270"/><rect x="1366" y="716.8" width="1.6" height="2.6" fill="#725270"/><rect x="1368" y="716.8" width="1.6" height="2.6" fill="#725270"/><rect x="1362" y="720.8" width="1.6" height="2.6" fill="#725270"/><rect x="1364" y="720.8" width="1.6" height="2.6" fill="#725270"/><rect x="1366" y="720.8" width="1.6" height="2.6" fill="#725270"/><rect x="1368" y="720.8" width="1.6" height="2.6" fill="#725270"/><rect x="1358" y="724.8" width="1.6" height="2.6" fill="#767676"/><rect x="1362" y="724.8" width="1.6" height="2.6" fill="#725270"/><rect x="1364" y="724.8" width="1.6" height="2.6" fill="#725270"/><rect x="1366" y="724.8" width="1.6" height="2.6" fill="#725270"/><rect x="1368" y="724.8" width="1.6" height="2.6" fill="#725270"/><rect x="1350" y="728" width="12" height="4" fill="#3a64a6"/><rect x="1362" y="728" width="8" height="4" fill="#4d8ff0"/><rect x="1358" y="732.8" width="1.6" height="2.6" fill="#767676"/><rect x="1354" y="736.8" width="1.6" height="2.6" fill="#767676"/><rect x="1354" y="744.8" width="1.6" height="2.6" fill="#367468"/><rect x="1356" y="744.8" width="1.6" height="2.6" fill="#367468"/><rect x="1358" y="744.8" width="1.6" height="2.6" fill="#367468"/><rect x="1360" y="744.8" width="1.6" height="2.6" fill="#367468"/><rect x="1362" y="744.8" width="1.6" height="2.6" fill="#367468"/><rect x="1364" y="744.8" width="1.6" height="2.6" fill="#367468"/><rect x="1366" y="744.8" width="1.6" height="2.6" fill="#767676"/><rect x="1368" y="744.8" width="1.6" height="2.6" fill="#3a5e7a"/><rect x="1358" y="748.8" width="1.6" height="2.6" fill="#3a5e7a"/><rect x="1360" y="748.8" width="1.6" height="2.6" fill="#3a5e7a"/><rect x="1362" y="748.8" width="1.6" height="2.6" fill="#3a5e7a"/><rect x="1364" y="748.8" width="1.6" height="2.6" fill="#3a5e7a"/><rect x="1366" y="748.8" width="1.6" height="2.6" fill="#3a5e7a"/><rect x="1366" y="752.8" width="1.6" height="2.6" fill="#367468"/><rect x="1368" y="752.8" width="1.6" height="2.6" fill="#367468"/><rect x="1358" y="756.8" width="1.6" height="2.6" fill="#3a5e7a"/><rect x="1360" y="756.8" width="1.6" height="2.6" fill="#3a5e7a"/><rect x="1362" y="756.8" width="1.6" height="2.6" fill="#3a5e7a"/><rect x="1364" y="756.8" width="1.6" height="2.6" fill="#3a5e7a"/><rect x="1366" y="756.8" width="1.6" height="2.6" fill="#3a5e7a"/><rect x="1362" y="760.8" width="1.6" height="2.6" fill="#5e7e8e"/><rect x="1364" y="760.8" width="1.6" height="2.6" fill="#5e7e8e"/><rect x="1366" y="760.8" width="1.6" height="2.6" fill="#5e7e8e"/><rect x="1368" y="760.8" width="1.6" height="2.6" fill="#5e7e8e"/><rect x="1362" y="764.8" width="1.6" height="2.6" fill="#5e7e8e"/><rect x="1364" y="764.8" width="1.6" height="2.6" fill="#5e7e8e"/><rect x="1366" y="764.8" width="1.6" height="2.6" fill="#5e7e8e"/><rect x="1368" y="764.8" width="1.6" height="2.6" fill="#5e7e8e"/><rect x="1362" y="768.8" width="1.6" height="2.6" fill="#5e7e8e"/><rect x="1364" y="768.8" width="1.6" height="2.6" fill="#5e7e8e"/><rect x="1366" y="768.8" width="1.6" height="2.6" fill="#5e7e8e"/><rect x="1368" y="768.8" width="1.6" height="2.6" fill="#5e7e8e"/><rect x="1358" y="772.8" width="1.6" height="2.6" fill="#767676"/><rect x="1360" y="772.8" width="1.6" height="2.6" fill="#767676"/><rect x="1358" y="776.8" width="1.6" height="2.6" fill="#3a5e7a"/><rect x="1360" y="776.8" width="1.6" height="2.6" fill="#3a5e7a"/><rect x="1362" y="776.8" width="1.6" height="2.6" fill="#3a5e7a"/><rect x="1364" y="776.8" width="1.6" height="2.6" fill="#3a5e7a"/><rect x="1366" y="776.8" width="1.6" height="2.6" fill="#3a5e7a"/><rect x="1362" y="780.8" width="1.6" height="2.6" fill="#5e7e8e"/><rect x="1364" y="780.8" width="1.6" height="2.6" fill="#5e7e8e"/><rect x="1366" y="780.8" width="1.6" height="2.6" fill="#5e7e8e"/><rect x="1368" y="780.8" width="1.6" height="2.6" fill="#5e7e8e"/><rect x="1362" y="784.8" width="1.6" height="2.6" fill="#5e7e8e"/><rect x="1364" y="784.8" width="1.6" height="2.6" fill="#5e7e8e"/><rect x="1366" y="784.8" width="1.6" height="2.6" fill="#5e7e8e"/><rect x="1368" y="784.8" width="1.6" height="2.6" fill="#5e7e8e"/><rect x="1358" y="788.8" width="1.6" height="2.6" fill="#767676"/><rect x="1360" y="788.8" width="1.6" height="2.6" fill="#767676"/><rect x="1358" y="796.8" width="1.6" height="2.6" fill="#725270"/><rect x="1360" y="796.8" width="1.6" height="2.6" fill="#725270"/><rect x="1362" y="796.8" width="1.6" height="2.6" fill="#725270"/><rect x="1366" y="796.8" width="1.6" height="2.6" fill="#767676"/><rect x="1362" y="800.8" width="1.6" height="2.6" fill="#725270"/><rect x="1364" y="800.8" width="1.6" height="2.6" fill="#725270"/><rect x="1366" y="800.8" width="1.6" height="2.6" fill="#725270"/><rect x="1368" y="800.8" width="1.6" height="2.6" fill="#725270"/><rect x="1350" y="804" width="12" height="4" fill="#3a64a6"/><rect x="1362" y="804" width="8" height="4" fill="#4d8ff0"/><rect x="1358" y="808.8" width="1.6" height="2.6" fill="#767676"/><rect x="1362" y="808.8" width="1.6" height="2.6" fill="#725270"/><rect x="1364" y="808.8" width="1.6" height="2.6" fill="#725270"/><rect x="1366" y="808.8" width="1.6" height="2.6" fill="#725270"/><rect x="1368" y="808.8" width="1.6" height="2.6" fill="#725270"/><rect x="1350" y="812" width="12" height="4" fill="#3a64a6"/><rect x="1362" y="812" width="8" height="4" fill="#4d8ff0"/><rect x="1358" y="816.8" width="1.6" height="2.6" fill="#767676"/><rect x="1354" y="820.8" width="1.6" height="2.6" fill="#767676"/><rect x="1354" y="828.8" width="1.6" height="2.6" fill="#445c3a"/><rect x="1356" y="828.8" width="1.6" height="2.6" fill="#445c3a"/><rect x="1360" y="828.8" width="1.6" height="2.6" fill="#445c3a"/><rect x="1362" y="828.8" width="1.6" height="2.6" fill="#445c3a"/><rect x="1364" y="828.8" width="1.6" height="2.6" fill="#445c3a"/><rect x="1366" y="828.8" width="1.6" height="2.6" fill="#445c3a"/><rect x="1368" y="828.8" width="1.6" height="2.6" fill="#445c3a"/><rect x="1354" y="832.8" width="1.6" height="2.6" fill="#445c3a"/><rect x="1356" y="832.8" width="1.6" height="2.6" fill="#445c3a"/><rect x="1360" y="832.8" width="1.6" height="2.6" fill="#445c3a"/><rect x="1362" y="832.8" width="1.6" height="2.6" fill="#445c3a"/><rect x="1364" y="832.8" width="1.6" height="2.6" fill="#445c3a"/><rect x="1366" y="832.8" width="1.6" height="2.6" fill="#445c3a"/><rect x="1368" y="832.8" width="1.6" height="2.6" fill="#445c3a"/><rect x="1354" y="836.8" width="1.6" height="2.6" fill="#445c3a"/><rect x="1356" y="836.8" width="1.6" height="2.6" fill="#445c3a"/><rect x="1360" y="836.8" width="1.6" height="2.6" fill="#445c3a"/><rect x="1362" y="836.8" width="1.6" height="2.6" fill="#445c3a"/><rect x="1364" y="836.8" width="1.6" height="2.6" fill="#445c3a"/><rect x="1366" y="836.8" width="1.6" height="2.6" fill="#445c3a"/><rect x="1368" y="836.8" width="1.6" height="2.6" fill="#445c3a"/><rect x="1354" y="844.8" width="1.6" height="2.6" fill="#3a5e7a"/><rect x="1356" y="844.8" width="1.6" height="2.6" fill="#3a5e7a"/><rect x="1358" y="844.8" width="1.6" height="2.6" fill="#3a5e7a"/><rect x="1360" y="844.8" width="1.6" height="2.6" fill="#3a5e7a"/><rect x="1364" y="844.8" width="1.6" height="2.6" fill="#7e7e64"/><rect x="1366" y="844.8" width="1.6" height="2.6" fill="#7e7e64"/><rect x="1368" y="844.8" width="1.6" height="2.6" fill="#7e7e64"/><rect x="1370" y="844.8" width="1.6" height="2.6" fill="#7e7e64"/><rect x="1358" y="848.8" width="1.6" height="2.6" fill="#5e7e8e"/><rect x="1360" y="848.8" width="1.6" height="2.6" fill="#5e7e8e"/><rect x="1362" y="848.8" width="1.6" height="2.6" fill="#5e7e8e"/><rect x="1364" y="848.8" width="1.6" height="2.6" fill="#5e7e8e"/><rect x="1366" y="848.8" width="1.6" height="2.6" fill="#5e7e8e"/><rect x="1368" y="848.8" width="1.6" height="2.6" fill="#5e7e8e"/><rect x="1358" y="852.8" width="1.6" height="2.6" fill="#7e7e64"/><rect x="1360" y="852.8" width="1.6" height="2.6" fill="#7e7e64"/><rect x="1362" y="852.8" width="1.6" height="2.6" fill="#7e7e64"/><rect x="1364" y="852.8" width="1.6" height="2.6" fill="#7e7e64"/><rect x="1366" y="852.8" width="1.6" height="2.6" fill="#7e7e64"/><rect x="1368" y="852.8" width="1.6" height="2.6" fill="#7e7e64"/><rect x="1354" y="856.8" width="1.6" height="2.6" fill="#767676"/><rect x="1354" y="864.8" width="1.6" height="2.6" fill="#367468"/><rect x="1356" y="864.8" width="1.6" height="2.6" fill="#367468"/><rect x="1358" y="864.8" width="1.6" height="2.6" fill="#367468"/><rect x="1360" y="864.8" width="1.6" height="2.6" fill="#367468"/><rect x="1362" y="864.8" width="1.6" height="2.6" fill="#367468"/><rect x="1364" y="864.8" width="1.6" height="2.6" fill="#367468"/><rect x="1366" y="864.8" width="1.6" height="2.6" fill="#767676"/><rect x="1368" y="864.8" width="1.6" height="2.6" fill="#3a5e7a"/><rect x="1358" y="868.8" width="1.6" height="2.6" fill="#767676"/><rect x="1360" y="868.8" width="1.6" height="2.6" fill="#367468"/><rect x="1362" y="868.8" width="1.6" height="2.6" fill="#367468"/><rect x="1364" y="868.8" width="1.6" height="2.6" fill="#367468"/><rect x="1358" y="872.8" width="1.6" height="2.6" fill="#725270"/><rect x="1360" y="872.8" width="1.6" height="2.6" fill="#725270"/><rect x="1364" y="872.8" width="1.6" height="2.6" fill="#767676"/><rect x="1366" y="872.8" width="1.6" height="2.6" fill="#767676"/><rect x="1368" y="872.8" width="1.6" height="2.6" fill="#5e7e8e"/><rect x="1370" y="872.8" width="1.6" height="2.6" fill="#5e7e8e"/><rect x="1358" y="880.8" width="1.6" height="2.6" fill="#445c3a"/><rect x="1360" y="880.8" width="1.6" height="2.6" fill="#445c3a"/><rect x="1364" y="880.8" width="1.6" height="2.6" fill="#445c3a"/><rect x="1366" y="880.8" width="1.6" height="2.6" fill="#445c3a"/><rect x="1368" y="880.8" width="1.6" height="2.6" fill="#445c3a"/><rect x="1358" y="884.8" width="1.6" height="2.6" fill="#725270"/><rect x="1360" y="884.8" width="1.6" height="2.6" fill="#725270"/><rect x="1364" y="884.8" width="1.6" height="2.6" fill="#767676"/><rect x="1366" y="884.8" width="1.6" height="2.6" fill="#5e7e8e"/><rect x="1368" y="884.8" width="1.6" height="2.6" fill="#5e7e8e"/><rect x="1366" y="888.8" width="1.6" height="2.6" fill="#367468"/><rect x="1368" y="888.8" width="1.6" height="2.6" fill="#367468"/><rect x="1362" y="892.8" width="1.6" height="2.6" fill="#725270"/><rect x="1364" y="892.8" width="1.6" height="2.6" fill="#725270"/><rect x="1366" y="892.8" width="1.6" height="2.6" fill="#725270"/><rect x="1368" y="892.8" width="1.6" height="2.6" fill="#725270"/><rect x="1358" y="896.8" width="1.6" height="2.6" fill="#767676"/><rect x="1358" y="904.8" width="1.6" height="2.6" fill="#3a5e7a"/><rect x="1360" y="904.8" width="1.6" height="2.6" fill="#3a5e7a"/><rect x="1362" y="904.8" width="1.6" height="2.6" fill="#3a5e7a"/><rect x="1364" y="904.8" width="1.6" height="2.6" fill="#3a5e7a"/><rect x="1366" y="904.8" width="1.6" height="2.6" fill="#3a5e7a"/><rect x="1362" y="908.8" width="1.6" height="2.6" fill="#76584c"/><rect x="1364" y="908.8" width="1.6" height="2.6" fill="#76584c"/><rect x="1366" y="908.8" width="1.6" height="2.6" fill="#76584c"/><rect x="1368" y="908.8" width="1.6" height="2.6" fill="#76584c"/><rect x="1362" y="912.8" width="1.6" height="2.6" fill="#76584c"/><rect x="1364" y="912.8" width="1.6" height="2.6" fill="#76584c"/><rect x="1366" y="912.8" width="1.6" height="2.6" fill="#76584c"/><rect x="1368" y="912.8" width="1.6" height="2.6" fill="#76584c"/><rect x="1362" y="916.8" width="1.6" height="2.6" fill="#5e7e8e"/><rect x="1364" y="916.8" width="1.6" height="2.6" fill="#5e7e8e"/><rect x="1366" y="916.8" width="1.6" height="2.6" fill="#5e7e8e"/><rect x="1368" y="916.8" width="1.6" height="2.6" fill="#5e7e8e"/><rect x="1362" y="920.8" width="1.6" height="2.6" fill="#5e7e8e"/><rect x="1364" y="920.8" width="1.6" height="2.6" fill="#5e7e8e"/><rect x="1366" y="920.8" width="1.6" height="2.6" fill="#5e7e8e"/><rect x="1368" y="920.8" width="1.6" height="2.6" fill="#5e7e8e"/><rect x="1362" y="924.8" width="1.6" height="2.6" fill="#5e7e8e"/><rect x="1364" y="924.8" width="1.6" height="2.6" fill="#5e7e8e"/><rect x="1366" y="924.8" width="1.6" height="2.6" fill="#5e7e8e"/><rect x="1368" y="924.8" width="1.6" height="2.6" fill="#5e7e8e"/><rect x="1362" y="928.8" width="1.6" height="2.6" fill="#5e7e8e"/><rect x="1364" y="928.8" width="1.6" height="2.6" fill="#5e7e8e"/><rect x="1366" y="928.8" width="1.6" height="2.6" fill="#5e7e8e"/><rect x="1368" y="928.8" width="1.6" height="2.6" fill="#5e7e8e"/><rect x="1358" y="932.8" width="1.6" height="2.6" fill="#767676"/><rect x="1360" y="932.8" width="1.6" height="2.6" fill="#767676"/><rect x="1358" y="940.8" width="1.6" height="2.6" fill="#3a5e7a"/><rect x="1360" y="940.8" width="1.6" height="2.6" fill="#3a5e7a"/><rect x="1362" y="940.8" width="1.6" height="2.6" fill="#3a5e7a"/><rect x="1364" y="940.8" width="1.6" height="2.6" fill="#3a5e7a"/><rect x="1366" y="940.8" width="1.6" height="2.6" fill="#3a5e7a"/><rect x="1362" y="944.8" width="1.6" height="2.6" fill="#5e7e8e"/><rect x="1364" y="944.8" width="1.6" height="2.6" fill="#5e7e8e"/><rect x="1366" y="944.8" width="1.6" height="2.6" fill="#5e7e8e"/><rect x="1368" y="944.8" width="1.6" height="2.6" fill="#5e7e8e"/><rect x="1366" y="1004.8" width="1.6" height="2.6" fill="#5e7e8e"/><rect x="1368" y="1004.8" width="1.6" height="2.6" fill="#5e7e8e"/><rect x="1362" y="1008.8" width="1.6" height="2.6" fill="#767676"/><rect x="1364" y="1008.8" width="1.6" height="2.6" fill="#767676"/><rect x="1364" y="1016.8" width="1.6" height="2.6" fill="#5e7e8e"/><rect x="1366" y="1016.8" width="1.6" height="2.6" fill="#5e7e8e"/><rect x="1368" y="1016.8" width="1.6" height="2.6" fill="#5e7e8e"/><rect x="1362" y="1020.8" width="1.6" height="2.6" fill="#767676"/><rect x="1364" y="1020.8" width="1.6" height="2.6" fill="#5e7e8e"/><rect x="1366" y="1020.8" width="1.6" height="2.6" fill="#5e7e8e"/><rect x="1368" y="1020.8" width="1.6" height="2.6" fill="#5e7e8e"/><rect x="1350" y="1024" width="12" height="4" fill="#3a64a6"/><rect x="1362" y="1024" width="8" height="4" fill="#4d8ff0"/><rect x="1358" y="1028.8" width="1.6" height="2.6" fill="#767676"/><rect x="1362" y="1028.8" width="1.6" height="2.6" fill="#725270"/><rect x="1364" y="1028.8" width="1.6" height="2.6" fill="#725270"/><rect x="1366" y="1028.8" width="1.6" height="2.6" fill="#725270"/><rect x="1368" y="1028.8" width="1.6" height="2.6" fill="#725270"/><rect x="1350" y="1032" width="12" height="4" fill="#3a64a6"/><rect x="1362" y="1032" width="8" height="4" fill="#4d8ff0"/><rect x="1358" y="1036.8" width="1.6" height="2.6" fill="#767676"/><rect x="1354" y="1040.8" width="1.6" height="2.6" fill="#767676"/><rect x="1354" y="1048.8" width="1.6" height="2.6" fill="#445c3a"/><rect x="1356" y="1048.8" width="1.6" height="2.6" fill="#445c3a"/><rect x="1360" y="1048.8" width="1.6" height="2.6" fill="#445c3a"/><rect x="1362" y="1048.8" width="1.6" height="2.6" fill="#445c3a"/><rect x="1364" y="1048.8" width="1.6" height="2.6" fill="#445c3a"/><rect x="1366" y="1048.8" width="1.6" height="2.6" fill="#445c3a"/><rect x="1368" y="1048.8" width="1.6" height="2.6" fill="#445c3a"/></svg>
<div class="abs" style="left:1344px;top:88px;width:2px;height:8px;background:#f26450"></div>
<div class="abs" style="left:1048px;top:948px;width:340px;height:56px;background:#3476cd;border-radius:11px;box-shadow:0 0 6px rgba(0,0,0,0.5)"></div>
<span class="wt" style="left:1061px">Keep</span>
<span class="wt" style="left:1138px;letter-spacing:0.6px">Undo</span>
<svg class="abs" style="left:1221px;top:960px" width="28" height="32" viewBox="0 0 28 32">
<path d="M4 2 H18.5 L26 9.5 V28 Q26 30 24 30 H4 Q2 30 2 28 V4 Q2 2 4 2 Z" fill="none" stroke="#fff" stroke-width="2.2" stroke-linejoin="round"/>
<path d="M13 7.5 V18 M7.5 12.8 H18.5 M7.5 22.5 H18.5" stroke="#fff" stroke-width="2.2"/>
</svg>
<div class="abs" style="left:1269px;top:960px;width:2px;height:32px;background:#a3adbb"></div>
<span class="wt" style="left:1289px;letter-spacing:1px">50</span>
<span class="wt" style="left:1326px">of</span>
<span class="wt" style="left:1356px">7</span>
<div class="abs" style="left:0;top:1052px;width:1370px;height:60px;background:#181818;border-top:2px solid #2b2b2b"></div>
<span class="ptab" style="left:42px">PROBLEMS</span>
<div class="abs" style="left:170px;top:1072px;width:53px;height:32px;border-radius:16px;background:#3476cd"></div>
<span class="ptab" style="left:180px;top:1072px;color:#fff;font-size:21px;-webkit-text-stroke:0.1px #fff">157</span>
<span class="ptab" style="left:268px">OUTPUT</span>
<span class="ptab" style="left:408px">DEBUG CONSOLE</span>
<span class="ptab" style="left:645px;color:#e7e7e7">TERMINAL</span>
<div class="abs" style="left:641px;top:1108px;width:119px;height:2px;background:#3b8eea"></div>
<span class="ptab" style="left:805px">PORTS</span>
<svg class="abs" style="left:1288px;top:1073px" width="60" height="30" viewBox="0 0 60 30">
<path d="M15 2 V28 M2 15 H28" stroke="#cccccc" stroke-width="2.4"/>
<path d="M38 13 L45.5 20 L53 13" fill="none" stroke="#cccccc" stroke-width="1.8"/>
</svg>
<div class="abs" style="left:1366px;top:1086px;width:5px;height:5px;border-radius:3px;background:#cccccc"></div>
</body></html>
